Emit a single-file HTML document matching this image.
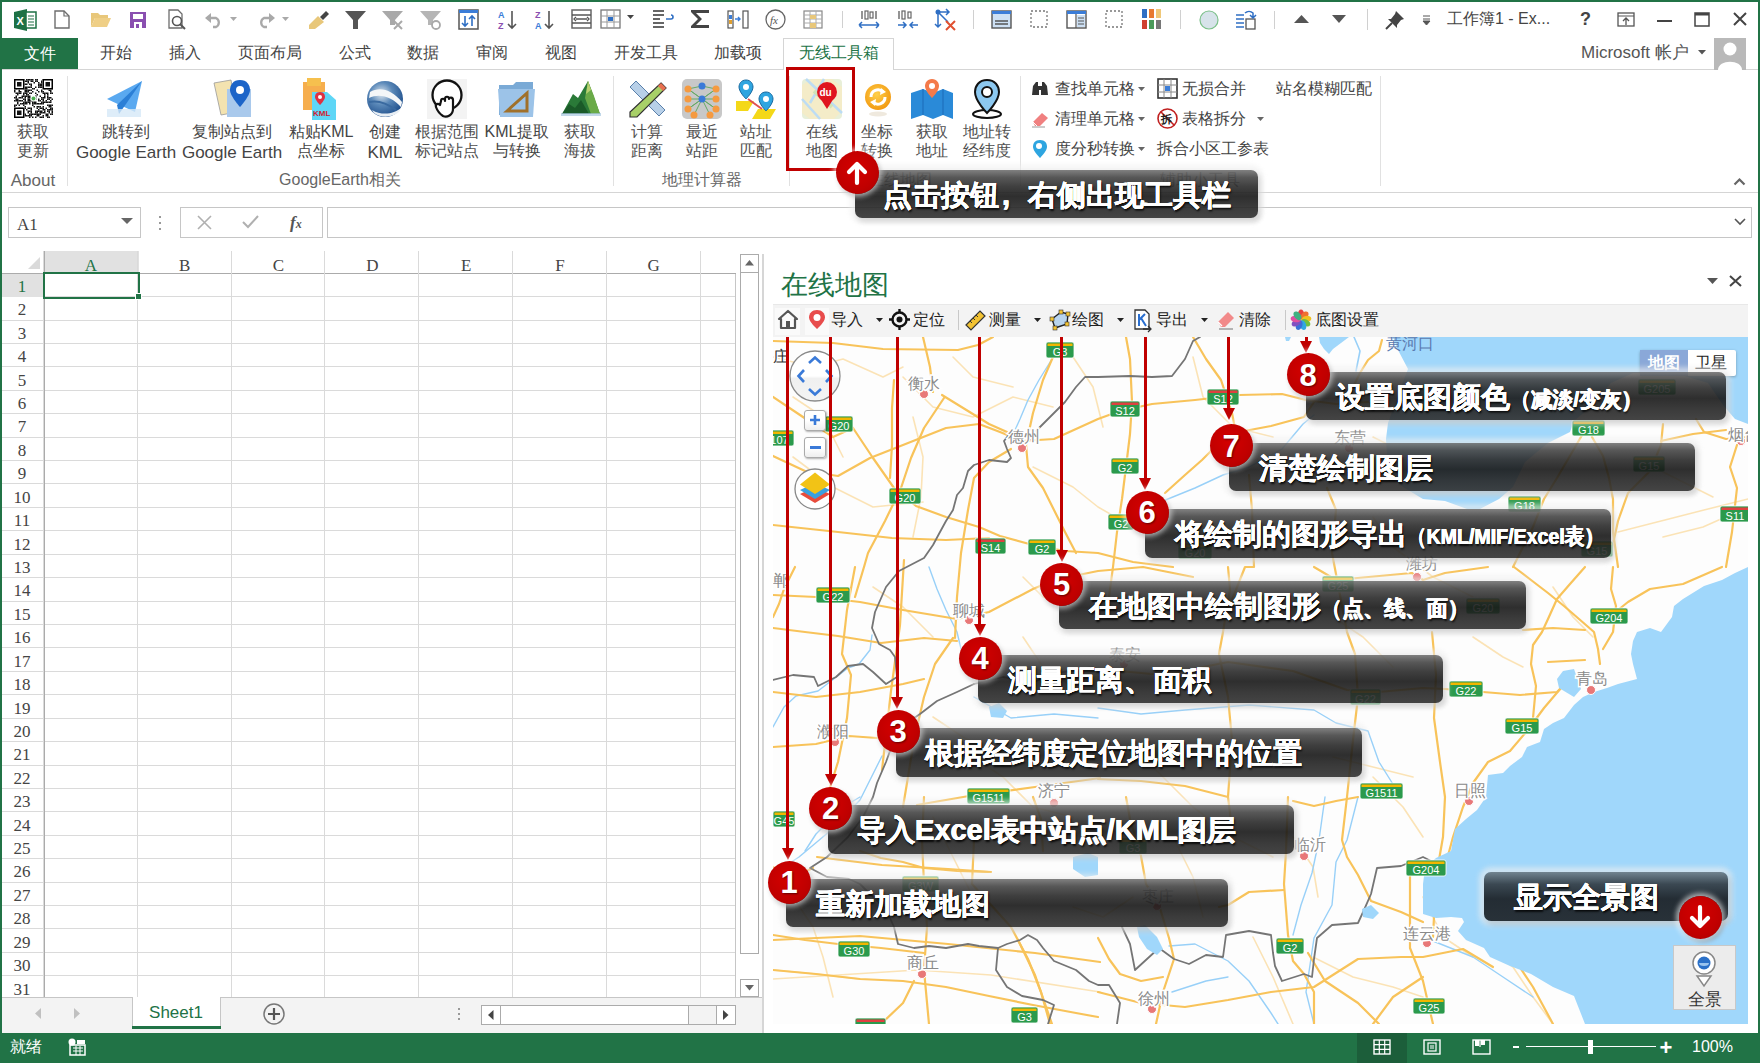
<!DOCTYPE html><html><head><meta charset="utf-8"><style>

*{box-sizing:border-box}
html,body{margin:0;padding:0}
body{width:1760px;height:1063px;overflow:hidden;position:relative;background:#fff;font-family:"Liberation Sans",sans-serif;color:#444}
.a{position:absolute}
.t{position:absolute;white-space:nowrap;line-height:1}
.c{text-align:center}
svg{position:absolute;overflow:visible}


</style></head><body>
<svg style="left:14px;top:9px" width="22" height="22" viewBox="0 0 22 22"><path d="M0 3 L13 0 L13 22 L0 19Z" fill="#1e7145"/><rect x="12" y="3" width="10" height="16" fill="#fff" stroke="#1e7145" stroke-width="1.5"/><path d="M14 7h6M14 10h6M14 13h6M14 16h6" stroke="#1e7145" stroke-width="1.2"/><text x="2.5" y="16" font-size="11" font-weight="bold" fill="#fff" font-family="Liberation Sans">X</text></svg>
<svg style="left:54px;top:10px" width="16" height="19" viewBox="0 0 16 19"><path d="M1 1 H10 L15 6 V18 H1Z" fill="#fff" stroke="#6d6d6d" stroke-width="1.4"/><path d="M10 1V6H15" fill="none" stroke="#6d6d6d" stroke-width="1.2"/></svg>
<svg style="left:90px;top:11px" width="22" height="17" viewBox="0 0 22 17"><path d="M1 2 H8 L10 4 H18 V7 H5 L1 16Z" fill="#e8c77a"/><path d="M5 7 H21 L17 16 H1Z" fill="#efcf86"/></svg>
<svg style="left:129px;top:11px" width="18" height="18" viewBox="0 0 18 18"><rect x="1" y="1" width="16" height="16" fill="#8a4fb0"/><rect x="4" y="3" width="10" height="5" fill="#fff"/><rect x="5" y="11" width="8" height="6" fill="#fff"/><rect x="7" y="13" width="3" height="4" fill="#8a4fb0"/></svg>
<svg style="left:168px;top:9px" width="19" height="21" viewBox="0 0 19 21"><path d="M1 1 H10 L14 5 V19 H1Z" fill="#fff" stroke="#6d6d6d" stroke-width="1.3"/><circle cx="9" cy="12" r="4.5" fill="#fff" stroke="#555" stroke-width="1.6"/><path d="M12 15 L17 20" stroke="#555" stroke-width="2"/></svg>
<svg style="left:204px;top:10px" width="20" height="18" viewBox="0 0 20 18"><path d="M4 8 H12 A5 5 0 0 1 12 17 H9" fill="none" stroke="#a9a9a9" stroke-width="2.3"/><path d="M1 8 L7 3 V13Z" fill="#a9a9a9"/></svg>
<svg style="left:230px;top:17px" width="8" height="5" viewBox="0 0 8 5"><path d="M0 0H7L3.5 4Z" fill="#a9a9a9"/></svg>
<svg style="left:256px;top:10px" width="20" height="18" viewBox="0 0 20 18"><path d="M16 8 H8 A5 5 0 0 0 8 17 H11" fill="none" stroke="#a9a9a9" stroke-width="2.3"/><path d="M19 8 L13 3 V13Z" fill="#a9a9a9"/></svg>
<svg style="left:282px;top:17px" width="8" height="5" viewBox="0 0 8 5"><path d="M0 0H7L3.5 4Z" fill="#a9a9a9"/></svg>
<svg style="left:307px;top:10px" width="22" height="19" viewBox="0 0 22 19"><path d="M13 7 L19 1 L22 4 L16 10Z" fill="#444"/><path d="M2 15 L11 6 L17 12 L8 19 L2 19Z" fill="#e8c77a"/></svg>
<svg style="left:345px;top:10px" width="21" height="19" viewBox="0 0 21 19"><path d="M0 1 H21 L13 10 V19 H8 V10Z" fill="#555"/></svg>
<svg style="left:382px;top:10px" width="21" height="19" viewBox="0 0 21 19"><path d="M0 1 H21 L13 10 V15 H8 V10Z" fill="#a9a9a9"/><path d="M12 11 L20 19 M20 11 L12 19" stroke="#a9a9a9" stroke-width="2"/></svg>
<svg style="left:420px;top:10px" width="21" height="19" viewBox="0 0 21 19"><path d="M0 1 H21 L13 10 V15 H8 V10Z" fill="#b5b5b5"/><circle cx="16" cy="15" r="4" fill="none" stroke="#a9a9a9" stroke-width="1.8"/></svg>
<svg style="left:458px;top:9px" width="21" height="21" viewBox="0 0 21 21"><rect x="1" y="1" width="19" height="19" fill="#fff" stroke="#555" stroke-width="1.5"/><rect x="1" y="1" width="19" height="3" fill="#3b7dd8"/><path d="M7 7V17M4 14L7 17L10 14M14 17V7M11 10L14 7L17 10" fill="none" stroke="#2f6fc4" stroke-width="1.6"/></svg>
<svg style="left:498px;top:9px" width="20" height="21" viewBox="0 0 20 21"><text x="0" y="9" font-size="9" fill="#3b7dd8" font-family="Liberation Sans" font-weight="bold">A</text><text x="0" y="20" font-size="9" fill="#8a4fb0" font-family="Liberation Sans" font-weight="bold">Z</text><path d="M14 2V19M10 15L14 19L18 15" fill="none" stroke="#555" stroke-width="1.6"/></svg>
<svg style="left:535px;top:9px" width="20" height="21" viewBox="0 0 20 21"><text x="0" y="9" font-size="9" fill="#8a4fb0" font-family="Liberation Sans" font-weight="bold">Z</text><text x="0" y="20" font-size="9" fill="#3b7dd8" font-family="Liberation Sans" font-weight="bold">A</text><path d="M14 2V19M10 15L14 19L18 15" fill="none" stroke="#555" stroke-width="1.6"/></svg>
<svg style="left:571px;top:9px" width="21" height="20" viewBox="0 0 21 20"><rect x="1" y="1" width="19" height="18" fill="none" stroke="#666" stroke-width="1.5"/><path d="M1 6H20M1 14H20M5 10H16M5 8L3 10L5 12M16 8L18 10L16 12" fill="none" stroke="#555" stroke-width="1.3"/></svg>
<svg style="left:600px;top:9px" width="21" height="20" viewBox="0 0 21 20"><rect x="1" y="1" width="19" height="18" fill="none" stroke="#777" stroke-width="1.3"/><path d="M1 7H20M1 13H20M7 1V19M14 1V19" stroke="#999" stroke-width="1"/><rect x="8" y="8" width="5" height="4" fill="#2f6fc4"/></svg>
<svg style="left:627px;top:15px" width="8" height="5" viewBox="0 0 8 5"><path d="M0 0H7L3.5 4Z" fill="#444"/></svg>
<svg style="left:652px;top:9px" width="22" height="20" viewBox="0 0 22 20"><path d="M1 2H12M1 6H12M1 10H8M1 14H12M1 18H12" stroke="#666" stroke-width="2"/><path d="M14 10H19A2 2 0 0 0 19 6" fill="none" stroke="#2f6fc4" stroke-width="1.6"/></svg>
<svg style="left:690px;top:9px" width="20" height="20" viewBox="0 0 20 20"><path d="M1 1H19V4H6L12 10L6 16H19V19H1V17L8 10L1 3Z" fill="#444"/></svg>
<svg style="left:727px;top:10px" width="22" height="19" viewBox="0 0 22 19"><rect x="1" y="1" width="5" height="17" fill="#fff" stroke="#555" stroke-width="1.2"/><rect x="2" y="5" width="3" height="4" fill="#3b7dd8"/><rect x="2" y="10" width="3" height="4" fill="#e0a030"/><rect x="16" y="1" width="5" height="17" fill="#fff" stroke="#555" stroke-width="1.2"/><path d="M8 9H13M11 7L13 9L11 11" stroke="#3b7dd8" stroke-width="1.4" fill="none"/></svg>
<svg style="left:765px;top:9px" width="21" height="21" viewBox="0 0 21 21"><circle cx="10.5" cy="10.5" r="9.5" fill="none" stroke="#666" stroke-width="1.3"/><text x="5" y="15" font-size="11" font-style="italic" fill="#555" font-family="Liberation Serif">fx</text></svg>
<svg style="left:803px;top:10px" width="20" height="19" viewBox="0 0 20 19"><rect x="1" y="1" width="18" height="17" fill="#fff" stroke="#888" stroke-width="1.2"/><path d="M1 5H19M1 9H19M1 13H19M7 1V18M13 1V18" stroke="#aaa" stroke-width="1"/><rect x="7" y="5" width="6" height="4" fill="#e8c77a"/><rect x="7" y="13" width="6" height="5" fill="#e8c77a"/></svg>
<div class="a" style="left:842px;top:11px;width:1px;height:17px;background:#d0d0d0"></div>
<svg style="left:858px;top:9px" width="22" height="21" viewBox="0 0 22 21"><path d="M4 2V10M18 2V10" stroke="#666" stroke-width="1.4"/><rect x="7" y="2" width="3" height="8" fill="none" stroke="#666" stroke-width="1.2"/><rect x="12" y="3" width="3" height="6" fill="none" stroke="#666" stroke-width="1.2"/><path d="M1 16H21M1 16L4 13M1 16L4 19M21 16L18 13M21 16L18 19" stroke="#2f6fc4" stroke-width="1.5" fill="none"/></svg>
<svg style="left:897px;top:9px" width="22" height="21" viewBox="0 0 22 21"><path d="M2 2V10" stroke="#666" stroke-width="1.4"/><rect x="5" y="2" width="3" height="8" fill="none" stroke="#666" stroke-width="1.2"/><rect x="11" y="3" width="3" height="6" fill="none" stroke="#666" stroke-width="1.2"/><path d="M1 16H9M6 13L9 16L6 19M21 16H13M16 13L13 16L16 19" stroke="#2f6fc4" stroke-width="1.5" fill="none"/></svg>
<svg style="left:934px;top:9px" width="23" height="21" viewBox="0 0 23 21"><circle cx="4" cy="3" r="2.5" fill="#2f6fc4"/><path d="M4 3V18M1 15L4 18L7 15M4 3L15 3M12 0L15 3L12 6M4 3L14 13" stroke="#2f6fc4" stroke-width="1.5" fill="none"/><path d="M12 12L21 21M21 12L12 21" stroke="#e05030" stroke-width="2"/></svg>
<div class="a" style="left:973px;top:10px;width:1px;height:19px;background:#d0d0d0"></div>
<svg style="left:991px;top:10px" width="21" height="19" viewBox="0 0 21 19"><rect x="1" y="1" width="19" height="17" fill="#cde0f4" stroke="#555" stroke-width="1.4"/><rect x="1" y="1" width="19" height="3" fill="#3b7dd8"/><path d="M4 11H17M4 14H17" stroke="#555" stroke-width="1.3"/></svg>
<svg style="left:1030px;top:10px" width="18" height="18" viewBox="0 0 18 18"><rect x="1" y="1" width="16" height="16" fill="none" stroke="#777" stroke-width="1.3" stroke-dasharray="2 2"/></svg>
<svg style="left:1066px;top:10px" width="21" height="19" viewBox="0 0 21 19"><rect x="1" y="1" width="19" height="17" fill="#fff" stroke="#555" stroke-width="1.4"/><rect x="1" y="1" width="19" height="3" fill="#3b7dd8"/><rect x="11" y="5" width="8" height="12" fill="#cde0f4"/><path d="M10 4V18M12 8H18M12 11H18M12 14H18" stroke="#555" stroke-width="1.2"/></svg>
<svg style="left:1105px;top:10px" width="18" height="18" viewBox="0 0 18 18"><rect x="1" y="1" width="16" height="16" fill="none" stroke="#777" stroke-width="1.3" stroke-dasharray="2 2"/></svg>
<svg style="left:1142px;top:9px" width="20" height="20" viewBox="0 0 20 20"><rect x="0" y="0" width="5" height="9" fill="#2f6fc4"/><rect x="7" y="0" width="5" height="9" fill="#e87a30"/><rect x="14" y="0" width="5" height="9" fill="#f0c878"/><rect x="0" y="11" width="5" height="9" fill="#d04030"/><rect x="7" y="11" width="5" height="9" fill="#4a9a5a"/><rect x="14" y="11" width="5" height="9" fill="#777"/></svg>
<div class="a" style="left:1180px;top:10px;width:1px;height:19px;background:#d0d0d0"></div>
<svg style="left:1199px;top:10px" width="20" height="20" viewBox="0 0 20 20"><circle cx="10" cy="10" r="9" fill="#d7e3ea" stroke="#7cc08a" stroke-width="1.2"/></svg>
<svg style="left:1235px;top:8px" width="22" height="22" viewBox="0 0 22 22"><path d="M1 7H9M1 11H9M1 15H9M1 19H9" stroke="#2f6fc4" stroke-width="1.7"/><rect x="11" y="11" width="9" height="10" fill="#fff" stroke="#555" stroke-width="1.3"/><path d="M10 5 A6 6 0 0 1 18 5 L18 9 M15 7 L18 10 L21 7" fill="none" stroke="#2f6fc4" stroke-width="1.5"/></svg>
<div class="a" style="left:1274px;top:11px;width:1px;height:18px;background:#d0d0d0"></div>
<svg style="left:1294px;top:15px" width="15" height="9" viewBox="0 0 15 9"><path d="M0 8 L7.5 0 L15 8Z" fill="#555"/></svg>
<svg style="left:1332px;top:15px" width="14" height="9" viewBox="0 0 14 9"><path d="M0 0 L14 0 L7 8Z" fill="#555"/></svg>
<div class="a" style="left:1367px;top:9px;width:1px;height:21px;background:#d0d0d0"></div>
<svg style="left:1385px;top:10px" width="20" height="19" viewBox="0 0 20 19"><path d="M11 1 L19 9 L16 10 L12 15 L12 18 L3 9 L6 9 L10 4Z" fill="#444"/><path d="M7 13 L1 19" stroke="#444" stroke-width="2"/></svg>
<svg style="left:1423px;top:15px" width="8" height="10" viewBox="0 0 8 10"><path d="M0 1H7M0 4H7M0 6H7L3.5 10Z" fill="#555" stroke="#555" stroke-width="1"/></svg>
<div class="t" style="left:1447px;top:11.0px;font-size:16px;color:#444;">工作簿1 - Ex...</div>
<div class="t" style="left:1580px;top:10.0px;font-size:18px;color:#444;font-weight:bold">?</div>
<svg style="left:1617px;top:12px" width="18" height="15" viewBox="0 0 18 15"><rect x="1" y="1" width="16" height="13" fill="none" stroke="#555" stroke-width="1.3"/><path d="M1 4H17" stroke="#555" stroke-width="1"/><path d="M9 13V6M6 9L9 6L12 9" fill="none" stroke="#555" stroke-width="1.3"/></svg>
<div class="a" style="left:1657px;top:20px;width:15px;height:2px;background:#444"></div>
<svg style="left:1694px;top:12px" width="16" height="15" viewBox="0 0 16 15"><rect x="1" y="1" width="14" height="13" fill="none" stroke="#444" stroke-width="1.5"/><rect x="1" y="1" width="14" height="2.5" fill="#444"/></svg>
<svg style="left:1733px;top:12px" width="14" height="14" viewBox="0 0 14 14"><path d="M1 1L13 13M13 1L1 13" stroke="#444" stroke-width="2"/></svg>
<div class="a" style="left:2px;top:38px;width:76px;height:32px;background:#217346"></div>
<div class="t" style="left:-110px;width:300px;text-align:center;top:46.0px;font-size:16px;color:#fff;">文件</div>
<div class="a" style="left:0px;top:69px;width:1758px;height:1px;background:#d5d5d5"></div>
<div class="a" style="left:783px;top:38px;width:111px;height:32px;background:#fff;border:1px solid #d5d5d5;border-bottom:none"></div>
<div class="t" style="left:100px;top:45.0px;font-size:16px;color:#444;">开始</div>
<div class="t" style="left:169px;top:45.0px;font-size:16px;color:#444;">插入</div>
<div class="t" style="left:238px;top:45.0px;font-size:16px;color:#444;">页面布局</div>
<div class="t" style="left:339px;top:45.0px;font-size:16px;color:#444;">公式</div>
<div class="t" style="left:407px;top:45.0px;font-size:16px;color:#444;">数据</div>
<div class="t" style="left:476px;top:45.0px;font-size:16px;color:#444;">审阅</div>
<div class="t" style="left:545px;top:45.0px;font-size:16px;color:#444;">视图</div>
<div class="t" style="left:614px;top:45.0px;font-size:16px;color:#444;">开发工具</div>
<div class="t" style="left:714px;top:45.0px;font-size:16px;color:#444;">加载项</div>
<div class="t" style="left:799px;top:45.0px;font-size:16px;color:#217346;">无线工具箱</div>
<div class="t" style="left:1581px;top:43.5px;font-size:17px;color:#555;">Microsoft 帐户</div>
<svg style="left:1698px;top:50px" width="8" height="5" viewBox="0 0 8 5"><path d="M0 0H8L4 4.5Z" fill="#555"/></svg>
<svg style="left:1714px;top:38px" width="32" height="32" viewBox="0 0 32 32"><rect width="32" height="32" fill="#b9b9b9"/><circle cx="16" cy="11" r="6.5" fill="#fff"/><path d="M4 32 C4 21 28 21 28 32Z" fill="#fff"/><circle cx="16" cy="11" r="5" fill="#b9b9b9" opacity="0"/></svg>
<div class="a" style="left:0px;top:192px;width:1758px;height:1px;background:#d5d5d5"></div>
<div class="a" style="left:67px;top:76px;width:1px;height:110px;background:#e1e1e1"></div>
<div class="a" style="left:613px;top:76px;width:1px;height:110px;background:#e1e1e1"></div>
<div class="a" style="left:789px;top:76px;width:1px;height:110px;background:#e1e1e1"></div>
<div class="a" style="left:1020px;top:76px;width:1px;height:110px;background:#e1e1e1"></div>
<div class="a" style="left:1380px;top:76px;width:1px;height:110px;background:#e1e1e1"></div>
<div class="t" style="left:-117px;width:300px;text-align:center;top:124.0px;font-size:16px;color:#505050;">获取</div>
<div class="t" style="left:-117px;width:300px;text-align:center;top:143.0px;font-size:16px;color:#505050;">更新</div>
<div class="t" style="left:-24px;width:300px;text-align:center;top:124.0px;font-size:16px;color:#444;">跳转到</div>
<div class="t" style="left:-24px;width:300px;text-align:center;top:143.5px;font-size:17px;color:#444;">Google Earth</div>
<div class="t" style="left:82px;width:300px;text-align:center;top:124.0px;font-size:16px;color:#444;">复制站点到</div>
<div class="t" style="left:82px;width:300px;text-align:center;top:143.5px;font-size:17px;color:#444;">Google Earth</div>
<div class="t" style="left:171px;width:300px;text-align:center;top:124.0px;font-size:16px;color:#444;">粘贴KML</div>
<div class="t" style="left:171px;width:300px;text-align:center;top:143.0px;font-size:16px;color:#444;">点坐标</div>
<div class="t" style="left:235px;width:300px;text-align:center;top:124.0px;font-size:16px;color:#444;">创建</div>
<div class="t" style="left:235px;width:300px;text-align:center;top:143.5px;font-size:17px;color:#444;">KML</div>
<div class="t" style="left:297px;width:300px;text-align:center;top:124.0px;font-size:16px;color:#505050;">根据范围</div>
<div class="t" style="left:297px;width:300px;text-align:center;top:143.0px;font-size:16px;color:#505050;">标记站点</div>
<div class="t" style="left:367px;width:300px;text-align:center;top:124.0px;font-size:16px;color:#444;">KML提取</div>
<div class="t" style="left:367px;width:300px;text-align:center;top:143.0px;font-size:16px;color:#444;">与转换</div>
<div class="t" style="left:430px;width:300px;text-align:center;top:124.0px;font-size:16px;color:#505050;">获取</div>
<div class="t" style="left:430px;width:300px;text-align:center;top:143.0px;font-size:16px;color:#505050;">海拔</div>
<div class="t" style="left:497px;width:300px;text-align:center;top:124.0px;font-size:16px;color:#505050;">计算</div>
<div class="t" style="left:497px;width:300px;text-align:center;top:143.0px;font-size:16px;color:#505050;">距离</div>
<div class="t" style="left:552px;width:300px;text-align:center;top:124.0px;font-size:16px;color:#505050;">最近</div>
<div class="t" style="left:552px;width:300px;text-align:center;top:143.0px;font-size:16px;color:#505050;">站距</div>
<div class="t" style="left:606px;width:300px;text-align:center;top:124.0px;font-size:16px;color:#505050;">站址</div>
<div class="t" style="left:606px;width:300px;text-align:center;top:143.0px;font-size:16px;color:#505050;">匹配</div>
<div class="t" style="left:672px;width:300px;text-align:center;top:124.0px;font-size:16px;color:#505050;">在线</div>
<div class="t" style="left:672px;width:300px;text-align:center;top:143.0px;font-size:16px;color:#505050;">地图</div>
<div class="t" style="left:727px;width:300px;text-align:center;top:124.0px;font-size:16px;color:#505050;">坐标</div>
<div class="t" style="left:727px;width:300px;text-align:center;top:143.0px;font-size:16px;color:#505050;">转换</div>
<div class="t" style="left:782px;width:300px;text-align:center;top:124.0px;font-size:16px;color:#505050;">获取</div>
<div class="t" style="left:782px;width:300px;text-align:center;top:143.0px;font-size:16px;color:#505050;">地址</div>
<div class="t" style="left:837px;width:300px;text-align:center;top:124.0px;font-size:16px;color:#505050;">地址转</div>
<div class="t" style="left:837px;width:300px;text-align:center;top:143.0px;font-size:16px;color:#505050;">经纬度</div>
<div class="t" style="left:-117px;width:300px;text-align:center;top:171.5px;font-size:17px;color:#666;">About</div>
<div class="t" style="left:190px;width:300px;text-align:center;top:172.0px;font-size:16px;color:#666;">GoogleEarth相关</div>
<div class="t" style="left:552px;width:300px;text-align:center;top:172.0px;font-size:16px;color:#666;">地理计算器</div>
<div class="t" style="left:750px;width:300px;text-align:center;top:172.0px;font-size:16px;color:#666;">在线地图</div>
<div class="t" style="left:1050px;width:300px;text-align:center;top:172.0px;font-size:16px;color:#666;">辅助小工具</div>
<div class="t" style="left:1055px;top:81.0px;font-size:16px;color:#444;">查找单元格</div>
<svg style="left:1138px;top:87px" width="7" height="4" viewBox="0 0 7 4"><path d="M0 0H7L3.5 4Z" fill="#666"/></svg>
<div class="t" style="left:1055px;top:111.0px;font-size:16px;color:#444;">清理单元格</div>
<svg style="left:1138px;top:117px" width="7" height="4" viewBox="0 0 7 4"><path d="M0 0H7L3.5 4Z" fill="#666"/></svg>
<div class="t" style="left:1055px;top:141.0px;font-size:16px;color:#444;">度分秒转换</div>
<svg style="left:1138px;top:147px" width="7" height="4" viewBox="0 0 7 4"><path d="M0 0H7L3.5 4Z" fill="#666"/></svg>
<div class="t" style="left:1182px;top:81.0px;font-size:16px;color:#444;">无损合并</div>
<div class="t" style="left:1182px;top:111.0px;font-size:16px;color:#444;">表格拆分</div>
<svg style="left:1257px;top:117px" width="7" height="4" viewBox="0 0 7 4"><path d="M0 0H7L3.5 4Z" fill="#666"/></svg>
<div class="t" style="left:1157px;top:141.0px;font-size:16px;color:#444;">拆合小区工参表</div>
<div class="t" style="left:1276px;top:81.0px;font-size:16px;color:#444;">站名模糊匹配</div>
<svg style="left:1733px;top:177px" width="13" height="9" viewBox="0 0 13 9"><path d="M1.5 7.5L6.5 2.5L11.5 7.5" fill="none" stroke="#666" stroke-width="2.2"/></svg>
<svg style="left:1031px;top:81px" width="18" height="15" viewBox="0 0 18 15"><path d="M2 5 L5 1 H7 V5 H11 V1 H13 L16 5 L17 14 H10 V9 H8 V14 H1Z" fill="#333"/></svg>
<svg style="left:1031px;top:110px" width="19" height="18" viewBox="0 0 19 18"><path d="M2 12 L11 3 L17 8 L9 16 H4Z" fill="#f08080"/><path d="M2 12 L6 16" stroke="#fff" stroke-width="1"/><path d="M1 17H14" stroke="#999" stroke-width="1"/></svg>
<svg style="left:1032px;top:139px" width="16" height="20" viewBox="0 0 16 20"><path d="M8 1 C3 1 1 4 1 8 C1 12 8 19 8 19 C8 19 15 12 15 8 C15 4 13 1 8 1Z" fill="#2ea5e0"/><circle cx="7" cy="7" r="3" fill="#fff"/></svg>
<svg style="left:1157px;top:78px" width="21" height="21" viewBox="0 0 21 21"><rect x="1" y="1" width="19" height="19" fill="#fff" stroke="#333" stroke-width="1.6"/><path d="M7 1V20M14 1V20M1 7H20M1 14H20" stroke="#888" stroke-width="1"/><rect x="8" y="8" width="5" height="5" fill="#3b7dd8"/></svg>
<svg style="left:1157px;top:108px" width="21" height="21" viewBox="0 0 21 21"><circle cx="10.5" cy="10.5" r="9.5" fill="#fff" stroke="#c02020" stroke-width="1.6"/><path d="M4 4L17 17" stroke="#c02020" stroke-width="1.6"/><text x="4" y="15" font-size="11" fill="#222" font-weight="bold">拆</text></svg>
<svg style="left:14px;top:79px" width="39" height="39" viewBox="0 0 39 39"><g fill="#111"><rect x="0.0" y="0.0" width="1.5" height="1.5"/><rect x="1.5" y="0.0" width="1.5" height="1.5"/><rect x="4.5" y="0.0" width="1.5" height="1.5"/><rect x="7.5" y="0.0" width="1.5" height="1.5"/><rect x="9.0" y="0.0" width="1.5" height="1.5"/><rect x="12.0" y="0.0" width="1.5" height="1.5"/><rect x="13.5" y="0.0" width="1.5" height="1.5"/><rect x="15.0" y="0.0" width="1.5" height="1.5"/><rect x="16.5" y="0.0" width="1.5" height="1.5"/><rect x="18.0" y="0.0" width="1.5" height="1.5"/><rect x="21.0" y="0.0" width="1.5" height="1.5"/><rect x="22.5" y="0.0" width="1.5" height="1.5"/><rect x="28.5" y="0.0" width="1.5" height="1.5"/><rect x="31.5" y="0.0" width="1.5" height="1.5"/><rect x="34.5" y="0.0" width="1.5" height="1.5"/><rect x="36.0" y="0.0" width="1.5" height="1.5"/><rect x="37.5" y="0.0" width="1.5" height="1.5"/><rect x="0.0" y="1.5" width="1.5" height="1.5"/><rect x="3.0" y="1.5" width="1.5" height="1.5"/><rect x="7.5" y="1.5" width="1.5" height="1.5"/><rect x="10.5" y="1.5" width="1.5" height="1.5"/><rect x="12.0" y="1.5" width="1.5" height="1.5"/><rect x="13.5" y="1.5" width="1.5" height="1.5"/><rect x="16.5" y="1.5" width="1.5" height="1.5"/><rect x="18.0" y="1.5" width="1.5" height="1.5"/><rect x="21.0" y="1.5" width="1.5" height="1.5"/><rect x="22.5" y="1.5" width="1.5" height="1.5"/><rect x="27.0" y="1.5" width="1.5" height="1.5"/><rect x="34.5" y="1.5" width="1.5" height="1.5"/><rect x="37.5" y="1.5" width="1.5" height="1.5"/><rect x="0.0" y="3.0" width="1.5" height="1.5"/><rect x="3.0" y="3.0" width="1.5" height="1.5"/><rect x="6.0" y="3.0" width="1.5" height="1.5"/><rect x="13.5" y="3.0" width="1.5" height="1.5"/><rect x="19.5" y="3.0" width="1.5" height="1.5"/><rect x="24.0" y="3.0" width="1.5" height="1.5"/><rect x="27.0" y="3.0" width="1.5" height="1.5"/><rect x="34.5" y="3.0" width="1.5" height="1.5"/><rect x="36.0" y="3.0" width="1.5" height="1.5"/><rect x="0.0" y="4.5" width="1.5" height="1.5"/><rect x="1.5" y="4.5" width="1.5" height="1.5"/><rect x="3.0" y="4.5" width="1.5" height="1.5"/><rect x="4.5" y="4.5" width="1.5" height="1.5"/><rect x="6.0" y="4.5" width="1.5" height="1.5"/><rect x="9.0" y="4.5" width="1.5" height="1.5"/><rect x="10.5" y="4.5" width="1.5" height="1.5"/><rect x="12.0" y="4.5" width="1.5" height="1.5"/><rect x="15.0" y="4.5" width="1.5" height="1.5"/><rect x="16.5" y="4.5" width="1.5" height="1.5"/><rect x="24.0" y="4.5" width="1.5" height="1.5"/><rect x="25.5" y="4.5" width="1.5" height="1.5"/><rect x="27.0" y="4.5" width="1.5" height="1.5"/><rect x="31.5" y="4.5" width="1.5" height="1.5"/><rect x="33.0" y="4.5" width="1.5" height="1.5"/><rect x="34.5" y="4.5" width="1.5" height="1.5"/><rect x="36.0" y="4.5" width="1.5" height="1.5"/><rect x="1.5" y="6.0" width="1.5" height="1.5"/><rect x="3.0" y="6.0" width="1.5" height="1.5"/><rect x="4.5" y="6.0" width="1.5" height="1.5"/><rect x="6.0" y="6.0" width="1.5" height="1.5"/><rect x="16.5" y="6.0" width="1.5" height="1.5"/><rect x="24.0" y="6.0" width="1.5" height="1.5"/><rect x="25.5" y="6.0" width="1.5" height="1.5"/><rect x="27.0" y="6.0" width="1.5" height="1.5"/><rect x="30.0" y="6.0" width="1.5" height="1.5"/><rect x="31.5" y="6.0" width="1.5" height="1.5"/><rect x="33.0" y="6.0" width="1.5" height="1.5"/><rect x="34.5" y="6.0" width="1.5" height="1.5"/><rect x="36.0" y="6.0" width="1.5" height="1.5"/><rect x="37.5" y="6.0" width="1.5" height="1.5"/><rect x="0.0" y="7.5" width="1.5" height="1.5"/><rect x="1.5" y="7.5" width="1.5" height="1.5"/><rect x="3.0" y="7.5" width="1.5" height="1.5"/><rect x="4.5" y="7.5" width="1.5" height="1.5"/><rect x="6.0" y="7.5" width="1.5" height="1.5"/><rect x="10.5" y="7.5" width="1.5" height="1.5"/><rect x="12.0" y="7.5" width="1.5" height="1.5"/><rect x="13.5" y="7.5" width="1.5" height="1.5"/><rect x="15.0" y="7.5" width="1.5" height="1.5"/><rect x="16.5" y="7.5" width="1.5" height="1.5"/><rect x="21.0" y="7.5" width="1.5" height="1.5"/><rect x="24.0" y="7.5" width="1.5" height="1.5"/><rect x="25.5" y="7.5" width="1.5" height="1.5"/><rect x="27.0" y="7.5" width="1.5" height="1.5"/><rect x="28.5" y="7.5" width="1.5" height="1.5"/><rect x="31.5" y="7.5" width="1.5" height="1.5"/><rect x="33.0" y="7.5" width="1.5" height="1.5"/><rect x="37.5" y="7.5" width="1.5" height="1.5"/><rect x="1.5" y="9.0" width="1.5" height="1.5"/><rect x="9.0" y="9.0" width="1.5" height="1.5"/><rect x="10.5" y="9.0" width="1.5" height="1.5"/><rect x="12.0" y="9.0" width="1.5" height="1.5"/><rect x="18.0" y="9.0" width="1.5" height="1.5"/><rect x="19.5" y="9.0" width="1.5" height="1.5"/><rect x="30.0" y="9.0" width="1.5" height="1.5"/><rect x="33.0" y="9.0" width="1.5" height="1.5"/><rect x="34.5" y="9.0" width="1.5" height="1.5"/><rect x="36.0" y="9.0" width="1.5" height="1.5"/><rect x="37.5" y="9.0" width="1.5" height="1.5"/><rect x="0.0" y="10.5" width="1.5" height="1.5"/><rect x="4.5" y="10.5" width="1.5" height="1.5"/><rect x="10.5" y="10.5" width="1.5" height="1.5"/><rect x="12.0" y="10.5" width="1.5" height="1.5"/><rect x="13.5" y="10.5" width="1.5" height="1.5"/><rect x="15.0" y="10.5" width="1.5" height="1.5"/><rect x="16.5" y="10.5" width="1.5" height="1.5"/><rect x="22.5" y="10.5" width="1.5" height="1.5"/><rect x="27.0" y="10.5" width="1.5" height="1.5"/><rect x="34.5" y="10.5" width="1.5" height="1.5"/><rect x="36.0" y="10.5" width="1.5" height="1.5"/><rect x="0.0" y="12.0" width="1.5" height="1.5"/><rect x="4.5" y="12.0" width="1.5" height="1.5"/><rect x="6.0" y="12.0" width="1.5" height="1.5"/><rect x="10.5" y="12.0" width="1.5" height="1.5"/><rect x="12.0" y="12.0" width="1.5" height="1.5"/><rect x="13.5" y="12.0" width="1.5" height="1.5"/><rect x="18.0" y="12.0" width="1.5" height="1.5"/><rect x="24.0" y="12.0" width="1.5" height="1.5"/><rect x="27.0" y="12.0" width="1.5" height="1.5"/><rect x="28.5" y="12.0" width="1.5" height="1.5"/><rect x="36.0" y="12.0" width="1.5" height="1.5"/><rect x="1.5" y="13.5" width="1.5" height="1.5"/><rect x="3.0" y="13.5" width="1.5" height="1.5"/><rect x="4.5" y="13.5" width="1.5" height="1.5"/><rect x="6.0" y="13.5" width="1.5" height="1.5"/><rect x="9.0" y="13.5" width="1.5" height="1.5"/><rect x="10.5" y="13.5" width="1.5" height="1.5"/><rect x="12.0" y="13.5" width="1.5" height="1.5"/><rect x="15.0" y="13.5" width="1.5" height="1.5"/><rect x="16.5" y="13.5" width="1.5" height="1.5"/><rect x="21.0" y="13.5" width="1.5" height="1.5"/><rect x="28.5" y="13.5" width="1.5" height="1.5"/><rect x="30.0" y="13.5" width="1.5" height="1.5"/><rect x="31.5" y="13.5" width="1.5" height="1.5"/><rect x="33.0" y="13.5" width="1.5" height="1.5"/><rect x="36.0" y="13.5" width="1.5" height="1.5"/><rect x="37.5" y="13.5" width="1.5" height="1.5"/><rect x="3.0" y="15.0" width="1.5" height="1.5"/><rect x="9.0" y="15.0" width="1.5" height="1.5"/><rect x="12.0" y="15.0" width="1.5" height="1.5"/><rect x="13.5" y="15.0" width="1.5" height="1.5"/><rect x="22.5" y="15.0" width="1.5" height="1.5"/><rect x="30.0" y="15.0" width="1.5" height="1.5"/><rect x="33.0" y="15.0" width="1.5" height="1.5"/><rect x="1.5" y="16.5" width="1.5" height="1.5"/><rect x="7.5" y="16.5" width="1.5" height="1.5"/><rect x="9.0" y="16.5" width="1.5" height="1.5"/><rect x="10.5" y="16.5" width="1.5" height="1.5"/><rect x="12.0" y="16.5" width="1.5" height="1.5"/><rect x="13.5" y="16.5" width="1.5" height="1.5"/><rect x="15.0" y="16.5" width="1.5" height="1.5"/><rect x="21.0" y="16.5" width="1.5" height="1.5"/><rect x="25.5" y="16.5" width="1.5" height="1.5"/><rect x="30.0" y="16.5" width="1.5" height="1.5"/><rect x="33.0" y="16.5" width="1.5" height="1.5"/><rect x="0.0" y="18.0" width="1.5" height="1.5"/><rect x="1.5" y="18.0" width="1.5" height="1.5"/><rect x="4.5" y="18.0" width="1.5" height="1.5"/><rect x="6.0" y="18.0" width="1.5" height="1.5"/><rect x="7.5" y="18.0" width="1.5" height="1.5"/><rect x="10.5" y="18.0" width="1.5" height="1.5"/><rect x="13.5" y="18.0" width="1.5" height="1.5"/><rect x="15.0" y="18.0" width="1.5" height="1.5"/><rect x="16.5" y="18.0" width="1.5" height="1.5"/><rect x="21.0" y="18.0" width="1.5" height="1.5"/><rect x="27.0" y="18.0" width="1.5" height="1.5"/><rect x="28.5" y="18.0" width="1.5" height="1.5"/><rect x="30.0" y="18.0" width="1.5" height="1.5"/><rect x="33.0" y="18.0" width="1.5" height="1.5"/><rect x="34.5" y="18.0" width="1.5" height="1.5"/><rect x="36.0" y="18.0" width="1.5" height="1.5"/><rect x="1.5" y="19.5" width="1.5" height="1.5"/><rect x="3.0" y="19.5" width="1.5" height="1.5"/><rect x="9.0" y="19.5" width="1.5" height="1.5"/><rect x="10.5" y="19.5" width="1.5" height="1.5"/><rect x="13.5" y="19.5" width="1.5" height="1.5"/><rect x="15.0" y="19.5" width="1.5" height="1.5"/><rect x="21.0" y="19.5" width="1.5" height="1.5"/><rect x="24.0" y="19.5" width="1.5" height="1.5"/><rect x="27.0" y="19.5" width="1.5" height="1.5"/><rect x="28.5" y="19.5" width="1.5" height="1.5"/><rect x="33.0" y="19.5" width="1.5" height="1.5"/><rect x="34.5" y="19.5" width="1.5" height="1.5"/><rect x="37.5" y="19.5" width="1.5" height="1.5"/><rect x="0.0" y="21.0" width="1.5" height="1.5"/><rect x="1.5" y="21.0" width="1.5" height="1.5"/><rect x="3.0" y="21.0" width="1.5" height="1.5"/><rect x="4.5" y="21.0" width="1.5" height="1.5"/><rect x="6.0" y="21.0" width="1.5" height="1.5"/><rect x="7.5" y="21.0" width="1.5" height="1.5"/><rect x="10.5" y="21.0" width="1.5" height="1.5"/><rect x="13.5" y="21.0" width="1.5" height="1.5"/><rect x="15.0" y="21.0" width="1.5" height="1.5"/><rect x="16.5" y="21.0" width="1.5" height="1.5"/><rect x="18.0" y="21.0" width="1.5" height="1.5"/><rect x="19.5" y="21.0" width="1.5" height="1.5"/><rect x="24.0" y="21.0" width="1.5" height="1.5"/><rect x="25.5" y="21.0" width="1.5" height="1.5"/><rect x="28.5" y="21.0" width="1.5" height="1.5"/><rect x="31.5" y="21.0" width="1.5" height="1.5"/><rect x="36.0" y="21.0" width="1.5" height="1.5"/><rect x="3.0" y="22.5" width="1.5" height="1.5"/><rect x="9.0" y="22.5" width="1.5" height="1.5"/><rect x="10.5" y="22.5" width="1.5" height="1.5"/><rect x="12.0" y="22.5" width="1.5" height="1.5"/><rect x="13.5" y="22.5" width="1.5" height="1.5"/><rect x="15.0" y="22.5" width="1.5" height="1.5"/><rect x="18.0" y="22.5" width="1.5" height="1.5"/><rect x="19.5" y="22.5" width="1.5" height="1.5"/><rect x="21.0" y="22.5" width="1.5" height="1.5"/><rect x="27.0" y="22.5" width="1.5" height="1.5"/><rect x="28.5" y="22.5" width="1.5" height="1.5"/><rect x="30.0" y="22.5" width="1.5" height="1.5"/><rect x="31.5" y="22.5" width="1.5" height="1.5"/><rect x="33.0" y="22.5" width="1.5" height="1.5"/><rect x="34.5" y="22.5" width="1.5" height="1.5"/><rect x="36.0" y="22.5" width="1.5" height="1.5"/><rect x="3.0" y="24.0" width="1.5" height="1.5"/><rect x="6.0" y="24.0" width="1.5" height="1.5"/><rect x="7.5" y="24.0" width="1.5" height="1.5"/><rect x="9.0" y="24.0" width="1.5" height="1.5"/><rect x="10.5" y="24.0" width="1.5" height="1.5"/><rect x="12.0" y="24.0" width="1.5" height="1.5"/><rect x="15.0" y="24.0" width="1.5" height="1.5"/><rect x="18.0" y="24.0" width="1.5" height="1.5"/><rect x="19.5" y="24.0" width="1.5" height="1.5"/><rect x="21.0" y="24.0" width="1.5" height="1.5"/><rect x="22.5" y="24.0" width="1.5" height="1.5"/><rect x="24.0" y="24.0" width="1.5" height="1.5"/><rect x="25.5" y="24.0" width="1.5" height="1.5"/><rect x="27.0" y="24.0" width="1.5" height="1.5"/><rect x="28.5" y="24.0" width="1.5" height="1.5"/><rect x="0.0" y="25.5" width="1.5" height="1.5"/><rect x="1.5" y="25.5" width="1.5" height="1.5"/><rect x="4.5" y="25.5" width="1.5" height="1.5"/><rect x="9.0" y="25.5" width="1.5" height="1.5"/><rect x="18.0" y="25.5" width="1.5" height="1.5"/><rect x="33.0" y="25.5" width="1.5" height="1.5"/><rect x="34.5" y="25.5" width="1.5" height="1.5"/><rect x="36.0" y="25.5" width="1.5" height="1.5"/><rect x="37.5" y="25.5" width="1.5" height="1.5"/><rect x="0.0" y="27.0" width="1.5" height="1.5"/><rect x="10.5" y="27.0" width="1.5" height="1.5"/><rect x="19.5" y="27.0" width="1.5" height="1.5"/><rect x="22.5" y="27.0" width="1.5" height="1.5"/><rect x="24.0" y="27.0" width="1.5" height="1.5"/><rect x="25.5" y="27.0" width="1.5" height="1.5"/><rect x="28.5" y="27.0" width="1.5" height="1.5"/><rect x="34.5" y="27.0" width="1.5" height="1.5"/><rect x="36.0" y="27.0" width="1.5" height="1.5"/><rect x="4.5" y="28.5" width="1.5" height="1.5"/><rect x="6.0" y="28.5" width="1.5" height="1.5"/><rect x="7.5" y="28.5" width="1.5" height="1.5"/><rect x="10.5" y="28.5" width="1.5" height="1.5"/><rect x="13.5" y="28.5" width="1.5" height="1.5"/><rect x="15.0" y="28.5" width="1.5" height="1.5"/><rect x="16.5" y="28.5" width="1.5" height="1.5"/><rect x="22.5" y="28.5" width="1.5" height="1.5"/><rect x="25.5" y="28.5" width="1.5" height="1.5"/><rect x="27.0" y="28.5" width="1.5" height="1.5"/><rect x="28.5" y="28.5" width="1.5" height="1.5"/><rect x="31.5" y="28.5" width="1.5" height="1.5"/><rect x="36.0" y="28.5" width="1.5" height="1.5"/><rect x="37.5" y="28.5" width="1.5" height="1.5"/><rect x="3.0" y="30.0" width="1.5" height="1.5"/><rect x="4.5" y="30.0" width="1.5" height="1.5"/><rect x="6.0" y="30.0" width="1.5" height="1.5"/><rect x="9.0" y="30.0" width="1.5" height="1.5"/><rect x="12.0" y="30.0" width="1.5" height="1.5"/><rect x="16.5" y="30.0" width="1.5" height="1.5"/><rect x="24.0" y="30.0" width="1.5" height="1.5"/><rect x="28.5" y="30.0" width="1.5" height="1.5"/><rect x="30.0" y="30.0" width="1.5" height="1.5"/><rect x="33.0" y="30.0" width="1.5" height="1.5"/><rect x="34.5" y="30.0" width="1.5" height="1.5"/><rect x="36.0" y="30.0" width="1.5" height="1.5"/><rect x="37.5" y="30.0" width="1.5" height="1.5"/><rect x="0.0" y="31.5" width="1.5" height="1.5"/><rect x="3.0" y="31.5" width="1.5" height="1.5"/><rect x="7.5" y="31.5" width="1.5" height="1.5"/><rect x="13.5" y="31.5" width="1.5" height="1.5"/><rect x="15.0" y="31.5" width="1.5" height="1.5"/><rect x="16.5" y="31.5" width="1.5" height="1.5"/><rect x="21.0" y="31.5" width="1.5" height="1.5"/><rect x="22.5" y="31.5" width="1.5" height="1.5"/><rect x="24.0" y="31.5" width="1.5" height="1.5"/><rect x="25.5" y="31.5" width="1.5" height="1.5"/><rect x="27.0" y="31.5" width="1.5" height="1.5"/><rect x="30.0" y="31.5" width="1.5" height="1.5"/><rect x="33.0" y="31.5" width="1.5" height="1.5"/><rect x="34.5" y="31.5" width="1.5" height="1.5"/><rect x="37.5" y="31.5" width="1.5" height="1.5"/><rect x="0.0" y="33.0" width="1.5" height="1.5"/><rect x="13.5" y="33.0" width="1.5" height="1.5"/><rect x="16.5" y="33.0" width="1.5" height="1.5"/><rect x="21.0" y="33.0" width="1.5" height="1.5"/><rect x="22.5" y="33.0" width="1.5" height="1.5"/><rect x="25.5" y="33.0" width="1.5" height="1.5"/><rect x="27.0" y="33.0" width="1.5" height="1.5"/><rect x="28.5" y="33.0" width="1.5" height="1.5"/><rect x="30.0" y="33.0" width="1.5" height="1.5"/><rect x="34.5" y="33.0" width="1.5" height="1.5"/><rect x="37.5" y="33.0" width="1.5" height="1.5"/><rect x="1.5" y="34.5" width="1.5" height="1.5"/><rect x="3.0" y="34.5" width="1.5" height="1.5"/><rect x="4.5" y="34.5" width="1.5" height="1.5"/><rect x="6.0" y="34.5" width="1.5" height="1.5"/><rect x="10.5" y="34.5" width="1.5" height="1.5"/><rect x="15.0" y="34.5" width="1.5" height="1.5"/><rect x="16.5" y="34.5" width="1.5" height="1.5"/><rect x="18.0" y="34.5" width="1.5" height="1.5"/><rect x="19.5" y="34.5" width="1.5" height="1.5"/><rect x="21.0" y="34.5" width="1.5" height="1.5"/><rect x="22.5" y="34.5" width="1.5" height="1.5"/><rect x="24.0" y="34.5" width="1.5" height="1.5"/><rect x="25.5" y="34.5" width="1.5" height="1.5"/><rect x="31.5" y="34.5" width="1.5" height="1.5"/><rect x="33.0" y="34.5" width="1.5" height="1.5"/><rect x="36.0" y="34.5" width="1.5" height="1.5"/><rect x="37.5" y="34.5" width="1.5" height="1.5"/><rect x="0.0" y="36.0" width="1.5" height="1.5"/><rect x="1.5" y="36.0" width="1.5" height="1.5"/><rect x="4.5" y="36.0" width="1.5" height="1.5"/><rect x="10.5" y="36.0" width="1.5" height="1.5"/><rect x="12.0" y="36.0" width="1.5" height="1.5"/><rect x="13.5" y="36.0" width="1.5" height="1.5"/><rect x="15.0" y="36.0" width="1.5" height="1.5"/><rect x="16.5" y="36.0" width="1.5" height="1.5"/><rect x="22.5" y="36.0" width="1.5" height="1.5"/><rect x="24.0" y="36.0" width="1.5" height="1.5"/><rect x="28.5" y="36.0" width="1.5" height="1.5"/><rect x="31.5" y="36.0" width="1.5" height="1.5"/><rect x="33.0" y="36.0" width="1.5" height="1.5"/><rect x="1.5" y="37.5" width="1.5" height="1.5"/><rect x="3.0" y="37.5" width="1.5" height="1.5"/><rect x="4.5" y="37.5" width="1.5" height="1.5"/><rect x="15.0" y="37.5" width="1.5" height="1.5"/><rect x="18.0" y="37.5" width="1.5" height="1.5"/><rect x="21.0" y="37.5" width="1.5" height="1.5"/><rect x="25.5" y="37.5" width="1.5" height="1.5"/><rect x="27.0" y="37.5" width="1.5" height="1.5"/><rect x="28.5" y="37.5" width="1.5" height="1.5"/><rect x="33.0" y="37.5" width="1.5" height="1.5"/><rect x="34.5" y="37.5" width="1.5" height="1.5"/><rect x="0" y="0" width="10.5" height="10.5" fill="#fff"/><rect x="0.75" y="0.75" width="9" height="9" fill="none" stroke="#000" stroke-width="1.5"/><rect x="3" y="3" width="4.5" height="4.5"/><rect x="28.5" y="0" width="10.5" height="10.5" fill="#fff"/><rect x="29.25" y="0.75" width="9" height="9" fill="none" stroke="#000" stroke-width="1.5"/><rect x="31.5" y="3" width="4.5" height="4.5"/><rect x="0" y="28.5" width="10.5" height="10.5" fill="#fff"/><rect x="0.75" y="29.25" width="9" height="9" fill="none" stroke="#000" stroke-width="1.5"/><rect x="3" y="31.5" width="4.5" height="4.5"/><circle cx="19.5" cy="19.5" r="3" fill="#fff"/><circle cx="19.5" cy="19.5" r="2" fill="#4caf50"/></g></svg>
<svg style="left:105px;top:79px" width="40" height="40" viewBox="0 0 40 40"><path d="M2 20 L37 2 L30 33Z" fill="#5aa9f0"/><path d="M12 26 L37 2 L14 35Z" fill="#2b7fd6"/><rect x="2" y="30" width="34" height="8" fill="#d6e8f8" opacity=".8"/></svg>
<svg style="left:213px;top:79px" width="40" height="40" viewBox="0 0 40 40"><path d="M1 4 L18 1 L24 33 L8 36Z" fill="#f3e3b0" stroke="#999" stroke-width=".8"/><rect x="14" y="10" width="24" height="28" fill="#a9c9ec"/><path d="M27 1 C20 1 17 6 17 11 C17 17 27 28 27 28 C27 28 37 17 37 11 C37 6 34 1 27 1Z" fill="#1c64c8"/><circle cx="27" cy="11" r="4" fill="#fff"/></svg>
<svg style="left:303px;top:78px" width="36" height="42" viewBox="0 0 36 42"><rect x="0" y="4" width="22" height="28" fill="#f6ae4e"/><rect x="4" y="0" width="14" height="8" fill="#f6c04e"/><path d="M9 14 H24 L33 22 V42 H9Z" fill="#5ed6f6"/><path d="M17 14 C13 14 12 17 12 19 C12 22 17 27 17 27 C17 27 22 22 22 19 C22 17 21 14 17 14Z" fill="#e03040"/><circle cx="17" cy="19" r="2" fill="#fff"/><text x="10" y="38" font-size="8" font-weight="bold" fill="#d02030" font-family="Liberation Sans">KML</text></svg>
<svg style="left:366px;top:80px" width="38" height="38" viewBox="0 0 38 38"><defs><radialGradient id="ge" cx="40%" cy="35%" r="70%"><stop offset="0" stop-color="#dfe8f0"/><stop offset=".45" stop-color="#5a88b8"/><stop offset="1" stop-color="#1a4a88"/></radialGradient></defs><circle cx="19" cy="19" r="18" fill="url(#ge)"/><path d="M4 12 C14 6 26 10 36 22 L35 27 C26 17 14 13 3 18Z" fill="#f4f6f8"/><path d="M6 30 C16 36 28 34 35 28 L33 32 C26 38 14 38 8 33Z" fill="#e8eef4"/><path d="M3 22 C12 20 22 24 30 30" stroke="#3a6aa0" stroke-width="2" fill="none"/></svg>
<svg style="left:427px;top:79px" width="40" height="40" viewBox="0 0 40 40"><rect x="0" y="0" width="40" height="40" fill="#f3f3f3"/><circle cx="20" cy="16" r="14.5" fill="#fff" stroke="#111" stroke-width="2.3"/><path d="M14 22 C14 19 18 19 18 22 V20 C18 17 22 17 22 20 C22 18 26 18 26 21 V30 C26 36 20 39 16 37 C13 35 10 31 9 28 C8 25 11 24 13 26Z" fill="#fff" stroke="#111" stroke-width="2.2" stroke-linejoin="round"/></svg>
<svg style="left:497px;top:79px" width="40" height="40" viewBox="0 0 40 40"><path d="M2 6 H16 L19 3 H36 V36 H2Z" fill="#7aaad6"/><path d="M1 10 H38 L36 38 H3Z" fill="#9cc3e8"/><path d="M10 32 L30 14 V32Z" fill="none" stroke="#a0702a" stroke-width="3"/></svg>
<svg style="left:561px;top:80px" width="40" height="38" viewBox="0 0 40 38"><path d="M1 34 L12 14 L17 18 L27 1 L39 34Z" fill="#2a7a38"/><path d="M27 1 L33 16 L39 34 H30 L24 18Z" fill="#6aaa48"/><path d="M27 1 L30 10 L25 14Z" fill="#b8d070"/><path d="M1 34 L8 24 L14 28 L20 20 L28 34Z" fill="#1a5a28"/><rect x="0" y="33" width="40" height="3" fill="#a8c8e0" opacity=".7"/></svg>
<svg style="left:627px;top:79px" width="40" height="40" viewBox="0 0 40 40"><path d="M3 8 L9 2 L38 31 L32 37Z" fill="#b8d0e8" stroke="#5a80aa" stroke-width="1"/><path d="M34 4 L39 9 L10 38 L3 38 L3 33Z" fill="#a8d068" stroke="#333" stroke-width="1.2"/><path d="M34 4 L39 9 L36 12 L31 7Z" fill="#e87050"/></svg>
<svg style="left:682px;top:79px" width="40" height="40" viewBox="0 0 40 40"><rect x="0" y="0" width="40" height="40" rx="5" fill="#c8c8c8"/><g stroke="#6a6" stroke-width="1" fill="none"><path d="M6 10 L20 7 L34 10 L20 20 L6 10 M6 20 L20 20 L34 20 M6 30 L20 20 L34 30 M12 36 L20 20 L28 36 M6 10 L34 30 M34 10 L6 30"/></g><g fill="#f59a40"><circle cx="6" cy="10" r="3.5"/><circle cx="34" cy="10" r="3.5"/><circle cx="6" cy="20" r="3.5"/><circle cx="34" cy="20" r="3.5"/><circle cx="6" cy="30" r="3.5"/><circle cx="34" cy="30" r="3.5"/><circle cx="12" cy="36" r="3.5"/><circle cx="28" cy="36" r="3.5"/></g><g fill="#3a7ad8"><circle cx="20" cy="7" r="3.5"/><circle cx="20" cy="20" r="3.5"/></g></svg>
<svg style="left:736px;top:79px" width="40" height="40" viewBox="0 0 40 40"><path d="M0 22 H18 L12 32 H0Z" fill="#f4d818"/><path d="M22 30 H40 L34 40 H16Z" fill="#f4d818"/><path d="M10 1 C5 1 3 5 3 8 C3 13 10 20 10 20 C10 20 17 13 17 8 C17 5 15 1 10 1Z" fill="#2ea5e0" stroke="#1a6aa0" stroke-width="1"/><circle cx="10" cy="8" r="3" fill="#fff"/><path d="M30 13 C25 13 23 17 23 20 C23 25 30 32 30 32 C30 32 37 25 37 20 C37 17 35 13 30 13Z" fill="#2ea5e0" stroke="#1a6aa0" stroke-width="1"/><circle cx="30" cy="20" r="3" fill="#fff"/><path d="M12 20 L26 30" stroke="#e05050" stroke-width="2"/></svg>
<svg style="left:802px;top:79px" width="40" height="40" viewBox="0 0 40 40"><rect x="0" y="0" width="40" height="40" rx="4" fill="#e8efd8"/><path d="M0 6 L10 0 H30 L40 8 V32 L32 40 H8 L0 34Z" fill="#f4ecc8"/><path d="M4 0 L40 34 M0 20 L18 40 M22 0 L8 24" stroke="#bcdcf4" stroke-width="2.5"/><path d="M12 12 L30 28" stroke="#cfe3b8" stroke-width="4"/><circle cx="25" cy="13" r="10" fill="#e0141e"/><path d="M18 19 L25 30 L32 19Z" fill="#e0141e"/><text x="17.5" y="17" font-size="10" font-weight="bold" fill="#fff" font-family="Liberation Sans">du</text></svg>
<svg style="left:861px;top:80px" width="34" height="38" viewBox="0 0 34 38"><defs><radialGradient id="cc" cx="45%" cy="40%" r="60%"><stop offset="0" stop-color="#ffd04a"/><stop offset="1" stop-color="#f29a12"/></radialGradient></defs><ellipse cx="17" cy="34" rx="9" ry="2.5" fill="#e8e0d0" opacity=".7"/><circle cx="17" cy="17" r="13" fill="url(#cc)"/><path d="M10 17 A7 7 0 0 1 22 12" fill="none" stroke="#fff" stroke-width="3"/><path d="M20 8 L25 12 L19 15Z" fill="#fff"/><path d="M24 17 A7 7 0 0 1 12 22" fill="none" stroke="#fff" stroke-width="3"/><path d="M14 26 L9 22 L15 19Z" fill="#fff"/></svg>
<svg style="left:911px;top:79px" width="42" height="40" viewBox="0 0 42 40"><path d="M0 14 L12 10 L22 14 L32 10 L42 14 V40 L32 36 L22 40 L12 36 L0 40Z" fill="#2a8ad8"/><path d="M12 10 V36 M32 10 V36" stroke="#1a6ab8" stroke-width="1"/><path d="M21 0 C16 0 14 4 14 7 C14 12 21 19 21 19 C21 19 28 12 28 7 C28 4 26 0 21 0Z" fill="#f47a4a"/><circle cx="21" cy="7" r="3" fill="#fff"/></svg>
<svg style="left:970px;top:79px" width="34" height="40" viewBox="0 0 34 40"><ellipse cx="17" cy="35" rx="14" ry="4" fill="none" stroke="#111" stroke-width="2"/><path d="M17 1 C9 1 5 7 5 13 C5 22 17 34 17 34 C17 34 29 22 29 13 C29 7 25 1 17 1Z" fill="#8cc8f0" stroke="#111" stroke-width="2"/><circle cx="17" cy="13" r="5" fill="#fff" stroke="#111" stroke-width="2"/></svg>
<div class="a" style="left:8px;top:207px;width:133px;height:31px;border:1px solid #c6c6c6;background:#fff"></div>
<div class="t" style="left:17px;top:215.5px;font-size:17px;color:#444;font-family:'Liberation Serif',serif">A1</div>
<svg style="left:121px;top:218px" width="12" height="7" viewBox="0 0 12 7"><path d="M0 0H12L6 6Z" fill="#666"/></svg>
<div class="a" style="left:159px;top:216px;width:2px;height:2px;background:#999"></div>
<div class="a" style="left:159px;top:222px;width:2px;height:2px;background:#999"></div>
<div class="a" style="left:159px;top:228px;width:2px;height:2px;background:#999"></div>
<div class="a" style="left:180px;top:207px;width:143px;height:31px;border:1px solid #c6c6c6;background:#fff"></div>
<svg style="left:197px;top:215px" width="15" height="15" viewBox="0 0 15 15"><path d="M1 1L14 14M14 1L1 14" stroke="#b0b0b0" stroke-width="1.6"/></svg>
<svg style="left:242px;top:215px" width="17" height="14" viewBox="0 0 17 14"><path d="M1 7L6 12L16 1" fill="none" stroke="#b0b0b0" stroke-width="2"/></svg>
<div class="t" style="left:290px;top:213.5px;font-size:17px;color:#555;font-family:'Liberation Serif',serif;font-weight:bold"><i>f</i><span style="font-size:12px;font-style:italic">x</span></div>
<div class="a" style="left:327px;top:207px;width:1425px;height:31px;border:1px solid #c6c6c6;background:#fff"></div>
<svg style="left:1734px;top:218px" width="12" height="8" viewBox="0 0 12 8"><path d="M1 1L6 6L11 1" fill="none" stroke="#555" stroke-width="1.6"/></svg>
<div class="a" style="left:0px;top:251px;width:739px;height:23px;background:#fff"></div>
<svg style="left:28px;top:257px" width="13" height="13" viewBox="0 0 13 13"><path d="M12 0 V12 H0Z" fill="#dadada"/></svg>
<div class="a" style="left:44px;top:251px;width:95px;height:23px;background:#e1e1e1"></div>
<div class="a" style="left:0px;top:273px;width:736px;height:1px;background:#ababab"></div>
<svg style="left:0px;top:0px" width="760" height="1000" viewBox="0 0 760 1000"><path d="M0 296.5H736" stroke="#dadada" stroke-width="1"/><path d="M0 320.5H736" stroke="#dadada" stroke-width="1"/><path d="M0 343.5H736" stroke="#dadada" stroke-width="1"/><path d="M0 366.5H736" stroke="#dadada" stroke-width="1"/><path d="M0 390.5H736" stroke="#dadada" stroke-width="1"/><path d="M0 413.5H736" stroke="#dadada" stroke-width="1"/><path d="M0 437.5H736" stroke="#dadada" stroke-width="1"/><path d="M0 460.5H736" stroke="#dadada" stroke-width="1"/><path d="M0 483.5H736" stroke="#dadada" stroke-width="1"/><path d="M0 507.5H736" stroke="#dadada" stroke-width="1"/><path d="M0 530.5H736" stroke="#dadada" stroke-width="1"/><path d="M0 554.5H736" stroke="#dadada" stroke-width="1"/><path d="M0 577.5H736" stroke="#dadada" stroke-width="1"/><path d="M0 601.5H736" stroke="#dadada" stroke-width="1"/><path d="M0 624.5H736" stroke="#dadada" stroke-width="1"/><path d="M0 647.5H736" stroke="#dadada" stroke-width="1"/><path d="M0 671.5H736" stroke="#dadada" stroke-width="1"/><path d="M0 694.5H736" stroke="#dadada" stroke-width="1"/><path d="M0 718.5H736" stroke="#dadada" stroke-width="1"/><path d="M0 741.5H736" stroke="#dadada" stroke-width="1"/><path d="M0 765.5H736" stroke="#dadada" stroke-width="1"/><path d="M0 788.5H736" stroke="#dadada" stroke-width="1"/><path d="M0 811.5H736" stroke="#dadada" stroke-width="1"/><path d="M0 835.5H736" stroke="#dadada" stroke-width="1"/><path d="M0 858.5H736" stroke="#dadada" stroke-width="1"/><path d="M0 882.5H736" stroke="#dadada" stroke-width="1"/><path d="M0 905.5H736" stroke="#dadada" stroke-width="1"/><path d="M0 928.5H736" stroke="#dadada" stroke-width="1"/><path d="M0 952.5H736" stroke="#dadada" stroke-width="1"/><path d="M0 975.5H736" stroke="#dadada" stroke-width="1"/><path d="M0 999.5H736" stroke="#dadada" stroke-width="1"/><path d="M43.5 251V997" stroke="#dadada" stroke-width="1"/><path d="M137.5 251V997" stroke="#dadada" stroke-width="1"/><path d="M231.5 251V997" stroke="#dadada" stroke-width="1"/><path d="M324.5 251V997" stroke="#dadada" stroke-width="1"/><path d="M418.5 251V997" stroke="#dadada" stroke-width="1"/><path d="M512.5 251V997" stroke="#dadada" stroke-width="1"/><path d="M606.5 251V997" stroke="#dadada" stroke-width="1"/><path d="M700.5 251V997" stroke="#dadada" stroke-width="1"/></svg>
<div class="a" style="left:44px;top:251px;width:1px;height:746px;background:#ababab"></div>
<div class="a" style="left:0px;top:274px;width:44px;height:23px;background:#e1e1e1"></div>
<div class="a" style="left:43px;top:274px;width:2px;height:23px;background:#217346"></div>
<div class="t" style="left:-59.099999999999994px;width:300px;text-align:center;top:256.5px;font-size:17px;color:#217346;font-family:'Liberation Serif',serif">A</div>
<div class="t" style="left:34.70000000000002px;width:300px;text-align:center;top:256.5px;font-size:17px;color:#444;font-family:'Liberation Serif',serif">B</div>
<div class="t" style="left:128.5px;width:300px;text-align:center;top:256.5px;font-size:17px;color:#444;font-family:'Liberation Serif',serif">C</div>
<div class="t" style="left:222.29999999999995px;width:300px;text-align:center;top:256.5px;font-size:17px;color:#444;font-family:'Liberation Serif',serif">D</div>
<div class="t" style="left:316.09999999999997px;width:300px;text-align:center;top:256.5px;font-size:17px;color:#444;font-family:'Liberation Serif',serif">E</div>
<div class="t" style="left:409.9px;width:300px;text-align:center;top:256.5px;font-size:17px;color:#444;font-family:'Liberation Serif',serif">F</div>
<div class="t" style="left:503.69999999999993px;width:300px;text-align:center;top:256.5px;font-size:17px;color:#444;font-family:'Liberation Serif',serif">G</div>
<div class="t" style="left:-128px;width:300px;text-align:center;top:277.9px;font-size:17px;color:#217346;font-family:'Liberation Serif',serif">1</div>
<div class="t" style="left:-128px;width:300px;text-align:center;top:301.3px;font-size:17px;color:#444;font-family:'Liberation Serif',serif">2</div>
<div class="t" style="left:-128px;width:300px;text-align:center;top:324.8px;font-size:17px;color:#444;font-family:'Liberation Serif',serif">3</div>
<div class="t" style="left:-128px;width:300px;text-align:center;top:348.2px;font-size:17px;color:#444;font-family:'Liberation Serif',serif">4</div>
<div class="t" style="left:-128px;width:300px;text-align:center;top:371.6px;font-size:17px;color:#444;font-family:'Liberation Serif',serif">5</div>
<div class="t" style="left:-128px;width:300px;text-align:center;top:395.0px;font-size:17px;color:#444;font-family:'Liberation Serif',serif">6</div>
<div class="t" style="left:-128px;width:300px;text-align:center;top:418.4px;font-size:17px;color:#444;font-family:'Liberation Serif',serif">7</div>
<div class="t" style="left:-128px;width:300px;text-align:center;top:441.9px;font-size:17px;color:#444;font-family:'Liberation Serif',serif">8</div>
<div class="t" style="left:-128px;width:300px;text-align:center;top:465.3px;font-size:17px;color:#444;font-family:'Liberation Serif',serif">9</div>
<div class="t" style="left:-128px;width:300px;text-align:center;top:488.7px;font-size:17px;color:#444;font-family:'Liberation Serif',serif">10</div>
<div class="t" style="left:-128px;width:300px;text-align:center;top:512.1px;font-size:17px;color:#444;font-family:'Liberation Serif',serif">11</div>
<div class="t" style="left:-128px;width:300px;text-align:center;top:535.5px;font-size:17px;color:#444;font-family:'Liberation Serif',serif">12</div>
<div class="t" style="left:-128px;width:300px;text-align:center;top:559.0px;font-size:17px;color:#444;font-family:'Liberation Serif',serif">13</div>
<div class="t" style="left:-128px;width:300px;text-align:center;top:582.4px;font-size:17px;color:#444;font-family:'Liberation Serif',serif">14</div>
<div class="t" style="left:-128px;width:300px;text-align:center;top:605.8px;font-size:17px;color:#444;font-family:'Liberation Serif',serif">15</div>
<div class="t" style="left:-128px;width:300px;text-align:center;top:629.2px;font-size:17px;color:#444;font-family:'Liberation Serif',serif">16</div>
<div class="t" style="left:-128px;width:300px;text-align:center;top:652.6px;font-size:17px;color:#444;font-family:'Liberation Serif',serif">17</div>
<div class="t" style="left:-128px;width:300px;text-align:center;top:676.0px;font-size:17px;color:#444;font-family:'Liberation Serif',serif">18</div>
<div class="t" style="left:-128px;width:300px;text-align:center;top:699.5px;font-size:17px;color:#444;font-family:'Liberation Serif',serif">19</div>
<div class="t" style="left:-128px;width:300px;text-align:center;top:722.9px;font-size:17px;color:#444;font-family:'Liberation Serif',serif">20</div>
<div class="t" style="left:-128px;width:300px;text-align:center;top:746.3px;font-size:17px;color:#444;font-family:'Liberation Serif',serif">21</div>
<div class="t" style="left:-128px;width:300px;text-align:center;top:769.7px;font-size:17px;color:#444;font-family:'Liberation Serif',serif">22</div>
<div class="t" style="left:-128px;width:300px;text-align:center;top:793.2px;font-size:17px;color:#444;font-family:'Liberation Serif',serif">23</div>
<div class="t" style="left:-128px;width:300px;text-align:center;top:816.6px;font-size:17px;color:#444;font-family:'Liberation Serif',serif">24</div>
<div class="t" style="left:-128px;width:300px;text-align:center;top:840.0px;font-size:17px;color:#444;font-family:'Liberation Serif',serif">25</div>
<div class="t" style="left:-128px;width:300px;text-align:center;top:863.4px;font-size:17px;color:#444;font-family:'Liberation Serif',serif">26</div>
<div class="t" style="left:-128px;width:300px;text-align:center;top:886.8px;font-size:17px;color:#444;font-family:'Liberation Serif',serif">27</div>
<div class="t" style="left:-128px;width:300px;text-align:center;top:910.2px;font-size:17px;color:#444;font-family:'Liberation Serif',serif">28</div>
<div class="t" style="left:-128px;width:300px;text-align:center;top:933.7px;font-size:17px;color:#444;font-family:'Liberation Serif',serif">29</div>
<div class="t" style="left:-128px;width:300px;text-align:center;top:957.1px;font-size:17px;color:#444;font-family:'Liberation Serif',serif">30</div>
<div class="t" style="left:-128px;width:300px;text-align:center;top:980.5px;font-size:17px;color:#444;font-family:'Liberation Serif',serif">31</div>
<div class="a" style="left:43px;top:272px;width:97px;height:27px;border:2px solid #217346"></div>
<div class="a" style="left:135px;top:293px;width:7px;height:7px;background:#217346;border:1px solid #fff"></div>
<div class="a" style="left:735px;top:274px;width:1px;height:723px;background:#c6c6c6"></div>
<div class="a" style="left:736px;top:251px;width:27px;height:746px;background:#fff"></div>
<div class="a" style="left:740px;top:254px;width:19px;height:743px;background:#fff"></div>
<div class="a" style="left:740px;top:254px;width:19px;height:19px;border:1px solid #ababab"></div>
<svg style="left:745px;top:260px" width="9" height="6" viewBox="0 0 9 6"><path d="M0 5.5 L4.5 0 L9 5.5Z" fill="#666"/></svg>
<div class="a" style="left:740px;top:272px;width:19px;height:682px;border:1px solid #ababab;background:#fff"></div>
<div class="a" style="left:740px;top:979px;width:19px;height:18px;border:1px solid #ababab"></div>
<svg style="left:745px;top:985px" width="9" height="6" viewBox="0 0 9 6"><path d="M0 0 L9 0 L4.5 5.5Z" fill="#666"/></svg>
<div class="a" style="left:0px;top:997px;width:762px;height:36px;background:#f3f3f3"></div>
<div class="a" style="left:0px;top:997px;width:132px;height:1px;background:#c6c6c6"></div>
<div class="a" style="left:221px;top:997px;width:541px;height:1px;background:#c6c6c6"></div>
<div class="a" style="left:132px;top:997px;width:89px;height:32px;background:#fff;border-left:1px solid #c6c6c6;border-right:1px solid #c6c6c6"></div>
<div class="a" style="left:132px;top:1026px;width:89px;height:3px;background:#217346"></div>
<div class="t" style="left:26px;width:300px;text-align:center;top:1003.5px;font-size:17px;color:#217346;">Sheet1</div>
<svg style="left:35px;top:1008px" width="7" height="11" viewBox="0 0 7 11"><path d="M6 0 V11 L0 5.5Z" fill="#c0c0c0"/></svg>
<svg style="left:74px;top:1008px" width="7" height="11" viewBox="0 0 7 11"><path d="M0 0 V11 L6 5.5Z" fill="#c0c0c0"/></svg>
<svg style="left:263px;top:1003px" width="22" height="22" viewBox="0 0 22 22"><circle cx="11" cy="11" r="10" fill="none" stroke="#777" stroke-width="1.5"/><path d="M11 5V17M5 11H17" stroke="#555" stroke-width="2.2"/></svg>
<div class="a" style="left:458px;top:1008px;width:2px;height:2px;background:#999"></div>
<div class="a" style="left:458px;top:1013px;width:2px;height:2px;background:#999"></div>
<div class="a" style="left:458px;top:1018px;width:2px;height:2px;background:#999"></div>
<div class="a" style="left:481px;top:1005px;width:255px;height:20px;border:1px solid #ababab;background:#f3f3f3"></div>
<div class="a" style="left:481px;top:1005px;width:20px;height:20px;border:1px solid #ababab;background:#fff"></div>
<svg style="left:488px;top:1010px" width="6" height="10" viewBox="0 0 6 10"><path d="M5.5 0 V10 L0 5Z" fill="#444"/></svg>
<div class="a" style="left:500px;top:1005px;width:189px;height:20px;border:1px solid #ababab;background:#fff"></div>
<div class="a" style="left:716px;top:1005px;width:20px;height:20px;border:1px solid #ababab;background:#fff"></div>
<svg style="left:723px;top:1010px" width="6" height="10" viewBox="0 0 6 10"><path d="M0 0 V10 L5.5 5Z" fill="#444"/></svg>
<div class="a" style="left:762px;top:254px;width:2px;height:779px;background:#d6d6d6"></div>
<div class="a" style="left:0px;top:1033px;width:1760px;height:30px;background:#217346"></div>
<div class="t" style="left:10px;top:1039.0px;font-size:16px;color:#fff;">就绪</div>
<svg style="left:68px;top:1038px" width="18" height="18" viewBox="0 0 18 18"><circle cx="4" cy="4" r="3.5" fill="#fff"/><rect x="2" y="7" width="15" height="10" fill="none" stroke="#fff" stroke-width="1.5"/><path d="M5 10H15M5 13H15M8 8V17M12 8V17" stroke="#fff" stroke-width="1"/><rect x="9" y="2" width="8" height="4" fill="#fff"/></svg>
<div class="a" style="left:1357px;top:1033px;width:50px;height:30px;background:#1c5e3a"></div>
<svg style="left:1373px;top:1039px" width="18" height="16" viewBox="0 0 18 16"><rect x="1" y="1" width="16" height="14" fill="none" stroke="#fff" stroke-width="1.4"/><path d="M1 5.7H17M1 10.3H17M6.3 1V15M11.7 1V15" stroke="#fff" stroke-width="1.2"/></svg>
<svg style="left:1423px;top:1039px" width="18" height="16" viewBox="0 0 18 16"><rect x="1" y="1" width="16" height="14" fill="none" stroke="#fff" stroke-width="1.4"/><rect x="5" y="4" width="8" height="8" fill="none" stroke="#fff" stroke-width="1.2"/><path d="M7 7H11M7 9H11" stroke="#fff" stroke-width="1"/></svg>
<svg style="left:1472px;top:1039px" width="19" height="16" viewBox="0 0 19 16"><rect x="1" y="1" width="17" height="14" fill="none" stroke="#fff" stroke-width="1.4"/><rect x="3" y="1" width="4" height="6" fill="#fff"/><rect x="9" y="1" width="4" height="5" fill="#fff"/><path d="M8 1V8" stroke="#fff" stroke-width="1.2"/></svg>
<div class="a" style="left:1513px;top:1046px;width:6px;height:2px;background:#fff"></div>
<div class="a" style="left:1526px;top:1046px;width:130px;height:1px;background:#fff"></div>
<div class="a" style="left:1588px;top:1040px;width:5px;height:14px;background:#fff"></div>
<div class="t" style="left:1516px;width:300px;text-align:center;top:1037.0px;font-size:22px;color:#fff;font-weight:bold">+</div>
<div class="t" style="left:1692px;top:1039.0px;font-size:16px;color:#fff;">100%</div>
<div class="t" style="left:781px;top:271.5px;font-size:27px;color:#217346;">在线地图</div>
<svg style="left:1707px;top:278px" width="11" height="7" viewBox="0 0 11 7"><path d="M0 0H11L5.5 6Z" fill="#555"/></svg>
<svg style="left:1729px;top:275px" width="13" height="12" viewBox="0 0 13 12"><path d="M1 1L12 11M12 1L1 11" stroke="#444" stroke-width="2"/></svg>
<div class="a" style="left:773px;top:304px;width:975px;height:33px;background:#f3f3f3;border-top:1px solid #e8e8e8"></div>
<div class="a" style="left:775px;top:308px;width:25px;height:27px;background:#fff;opacity:.6"></div>
<div class="a" style="left:805px;top:308px;width:24px;height:27px;background:#fff;opacity:.6"></div>
<svg style="left:778px;top:310px" width="20" height="19" viewBox="0 0 20 19"><path d="M10 1 L19 9 L17 9 L17 18 L3 18 L3 9 L1 9Z" fill="none" stroke="#555" stroke-width="2.2" stroke-linejoin="round"/><rect x="8" y="11" width="4" height="7" fill="#555"/></svg>
<svg style="left:808px;top:309px" width="18" height="21" viewBox="0 0 18 21"><path d="M9 1 C4 1 1 4.5 1 8.5 C1 13 9 20 9 20 C9 20 17 13 17 8.5 C17 4.5 14 1 9 1Z" fill="#e84c4c"/><circle cx="9" cy="8.5" r="3.5" fill="#fff"/></svg>
<div class="t" style="left:831px;top:312.0px;font-size:16px;color:#222;">导入</div>
<svg style="left:876px;top:318px" width="7" height="4" viewBox="0 0 7 4"><path d="M0 0H7L3.5 4Z" fill="#222"/></svg>
<svg style="left:889px;top:309px" width="21" height="21" viewBox="0 0 21 21"><circle cx="10.5" cy="10.5" r="7" fill="none" stroke="#111" stroke-width="2.4"/><circle cx="10.5" cy="10.5" r="3" fill="#111"/><path d="M10.5 0V4M10.5 17V21M0 10.5H4M17 10.5H21" stroke="#111" stroke-width="2.4"/></svg>
<div class="t" style="left:913px;top:312.0px;font-size:16px;color:#222;">定位</div>
<div class="a" style="left:958px;top:310px;width:1px;height:20px;background:#c8c8c8"></div>
<svg style="left:965px;top:310px" width="21" height="20" viewBox="0 0 21 20"><path d="M1 15 L15 1 L20 6 L6 20Z" fill="#f2c232" stroke="#333" stroke-width="1.2"/><path d="M5 11L7 13M8 8L10 10M11 5L13 7" stroke="#333" stroke-width="1"/></svg>
<div class="t" style="left:989px;top:312.0px;font-size:16px;color:#222;">测量</div>
<svg style="left:1034px;top:318px" width="7" height="4" viewBox="0 0 7 4"><path d="M0 0H7L3.5 4Z" fill="#222"/></svg>
<svg style="left:1049px;top:309px" width="22" height="22" viewBox="0 0 22 22"><path d="M3 10 L12 3 L19 5 L18 15 L6 19Z" fill="#b8d4ee" stroke="#222" stroke-width="1.4"/><g fill="#f2c232" stroke="#333" stroke-width=".6"><rect x="1" y="8" width="4" height="4"/><rect x="10" y="1" width="4" height="4"/><rect x="17" y="3" width="4" height="4"/><rect x="16" y="13" width="4" height="4"/><rect x="4" y="17" width="4" height="4"/></g></svg>
<div class="t" style="left:1072px;top:312.0px;font-size:16px;color:#222;">绘图</div>
<svg style="left:1117px;top:318px" width="7" height="4" viewBox="0 0 7 4"><path d="M0 0H7L3.5 4Z" fill="#222"/></svg>
<svg style="left:1133px;top:309px" width="19" height="22" viewBox="0 0 19 22"><path d="M2 1 H12 L16 5 V20 H2Z" fill="#fff" stroke="#333" stroke-width="1.3"/><path d="M6 5V17M6 11L12 5M8 9L13 17" stroke="#2a6fd0" stroke-width="2" fill="none"/><path d="M10 20H18M15 17L18 20L15 23" stroke="#333" stroke-width="1.3" fill="none"/></svg>
<div class="t" style="left:1156px;top:312.0px;font-size:16px;color:#222;">导出</div>
<svg style="left:1201px;top:318px" width="7" height="4" viewBox="0 0 7 4"><path d="M0 0H7L3.5 4Z" fill="#222"/></svg>
<svg style="left:1217px;top:310px" width="18" height="20" viewBox="0 0 18 20"><path d="M1 12 L11 2 L17 8 L8 17 L4 17Z" fill="#f28a8a"/><path d="M1 12 L5 16" stroke="#fff" stroke-width="1.2"/><path d="M2 19H16" stroke="#888" stroke-width="1.2"/></svg>
<div class="t" style="left:1239px;top:312.0px;font-size:16px;color:#222;">清除</div>
<div class="a" style="left:1285px;top:310px;width:1px;height:20px;background:#c8c8c8"></div>
<svg style="left:1291px;top:310px" width="20" height="20" viewBox="0 0 20 20"><g transform="translate(10 10)"><ellipse cx="0" cy="-5.5" rx="3.2" ry="5" fill="#e84040" transform="rotate(0)"/><ellipse cx="0" cy="-5.5" rx="3.2" ry="5" fill="#f07030" transform="rotate(40)"/><ellipse cx="0" cy="-5.5" rx="3.2" ry="5" fill="#f0c020" transform="rotate(80)"/><ellipse cx="0" cy="-5.5" rx="3.2" ry="5" fill="#70c040" transform="rotate(120)"/><ellipse cx="0" cy="-5.5" rx="3.2" ry="5" fill="#30a8e0" transform="rotate(160)"/><ellipse cx="0" cy="-5.5" rx="3.2" ry="5" fill="#3a70d8" transform="rotate(200)"/><ellipse cx="0" cy="-5.5" rx="3.2" ry="5" fill="#8050c0" transform="rotate(240)"/><ellipse cx="0" cy="-5.5" rx="3.2" ry="5" fill="#e050a0" transform="rotate(280)"/><ellipse cx="0" cy="-5.5" rx="3.2" ry="5" fill="#40b080" transform="rotate(320)"/></g></svg>
<div class="t" style="left:1315px;top:312.0px;font-size:16px;color:#222;">底图设置</div>
<svg style="left:773px;top:337px" width="975" height="687" viewBox="0 0 975 687"><defs><clipPath id="mc"><rect width="975" height="687"/></clipPath></defs><g clip-path="url(#mc)"><rect width="975" height="687" fill="#fdfdfd"/><path d="M0,20 L40,30 L70,22 L110,40 L130,30" fill="none" stroke="#fbe3b6" stroke-width="1.6" stroke-linejoin="round" stroke-linecap="round" /><path d="M130,40 L160,70 L200,80 L240,60 L280,70" fill="none" stroke="#fbe3b6" stroke-width="1.6" stroke-linejoin="round" stroke-linecap="round" /><path d="M20,120 L60,150 L100,170 L150,165" fill="none" stroke="#fbe3b6" stroke-width="1.6" stroke-linejoin="round" stroke-linecap="round" /><path d="M140,80 L150,120 L148,160 L140,200" fill="none" stroke="#fbe3b6" stroke-width="1.6" stroke-linejoin="round" stroke-linecap="round" /><path d="M260,130 L300,150 L325,170 L360,190" fill="none" stroke="#fbe3b6" stroke-width="1.6" stroke-linejoin="round" stroke-linecap="round" /><path d="M420,20 L430,60 L460,90 L500,100" fill="none" stroke="#fbe3b6" stroke-width="1.6" stroke-linejoin="round" stroke-linecap="round" /><path d="M600,180 L620,210 L660,240 L700,260" fill="none" stroke="#fbe3b6" stroke-width="1.6" stroke-linejoin="round" stroke-linecap="round" /><path d="M780,250 L800,280 L820,300" fill="none" stroke="#fbe3b6" stroke-width="1.6" stroke-linejoin="round" stroke-linecap="round" /><path d="M890,200 L930,190 L975,170" fill="none" stroke="#fbe3b6" stroke-width="1.6" stroke-linejoin="round" stroke-linecap="round" /><path d="M845,195 L888,184 L931,173 L975,162" fill="none" stroke="#fbe3b6" stroke-width="1.6" stroke-linejoin="round" stroke-linecap="round" /><path d="M200,420 L230,440 L260,470 L300,480" fill="none" stroke="#fbe3b6" stroke-width="1.6" stroke-linejoin="round" stroke-linecap="round" /><path d="M380,430 L420,470 L460,500 L500,520" fill="none" stroke="#fbe3b6" stroke-width="1.6" stroke-linejoin="round" stroke-linecap="round" /><path d="M300,570 L330,580 L360,560" fill="none" stroke="#fbe3b6" stroke-width="1.6" stroke-linejoin="round" stroke-linecap="round" /><path d="M520,500 L540,530 L545,560" fill="none" stroke="#fbe3b6" stroke-width="1.6" stroke-linejoin="round" stroke-linecap="round" /><path d="M600,440 L630,470 L650,500" fill="none" stroke="#fbe3b6" stroke-width="1.6" stroke-linejoin="round" stroke-linecap="round" /><path d="M0,633 L43,637 L87,642" fill="none" stroke="#fbe3b6" stroke-width="1.6" stroke-linejoin="round" stroke-linecap="round" /><path d="M700,600 L740,630 L760,660 L780,687" fill="none" stroke="#fbe3b6" stroke-width="1.6" stroke-linejoin="round" stroke-linecap="round" /><path d="M540,620 L580,640 L620,650 L650,660" fill="none" stroke="#fbe3b6" stroke-width="1.6" stroke-linejoin="round" stroke-linecap="round" /><path d="M20,560 L40,590 L50,620 L60,660" fill="none" stroke="#fbe3b6" stroke-width="1.6" stroke-linejoin="round" stroke-linecap="round" /><path d="M160,480 L180,520 L200,560" fill="none" stroke="#fbe3b6" stroke-width="1.6" stroke-linejoin="round" stroke-linecap="round" /><path d="M250,240 L270,260 L300,270" fill="none" stroke="#fbe3b6" stroke-width="1.6" stroke-linejoin="round" stroke-linecap="round" /><path d="M100,250 L130,270 L160,300" fill="none" stroke="#fbe3b6" stroke-width="1.6" stroke-linejoin="round" stroke-linecap="round" /><path d="M560,280 L590,300 L620,330" fill="none" stroke="#fbe3b6" stroke-width="1.6" stroke-linejoin="round" stroke-linecap="round" /><path d="M700,300 L730,320 L750,330" fill="none" stroke="#fbe3b6" stroke-width="1.6" stroke-linejoin="round" stroke-linecap="round" /><path d="M900,300 L940,330 L975,350" fill="none" stroke="#fbe3b6" stroke-width="1.6" stroke-linejoin="round" stroke-linecap="round" /><path d="M650,560 L670,600 L700,620" fill="none" stroke="#fbe3b6" stroke-width="1.6" stroke-linejoin="round" stroke-linecap="round" /><path d="M480,600 L500,640 L520,687" fill="none" stroke="#fbe3b6" stroke-width="1.6" stroke-linejoin="round" stroke-linecap="round" /><path d="M0,642 L65,638 L144,633 L218,638 L327,655" fill="none" stroke="#fbe3b6" stroke-width="1.6" stroke-linejoin="round" stroke-linecap="round" /><path d="M160,380 L190,400 L230,420" fill="none" stroke="#fbe3b6" stroke-width="1.6" stroke-linejoin="round" stroke-linecap="round" /><path d="M250,300 L270,330 L300,350 L325,360" fill="none" stroke="#fbe3b6" stroke-width="1.6" stroke-linejoin="round" stroke-linecap="round" /><path d="M400,500 L420,540 L430,580" fill="none" stroke="#fbe3b6" stroke-width="1.6" stroke-linejoin="round" stroke-linecap="round" /><path d="M560,420 L600,430 L640,440" fill="none" stroke="#fbe3b6" stroke-width="1.6" stroke-linejoin="round" stroke-linecap="round" /><path d="M700,500 L730,520 L760,560" fill="none" stroke="#fbe3b6" stroke-width="1.6" stroke-linejoin="round" stroke-linecap="round" /><path d="M880,400 L920,420 L960,440" fill="none" stroke="#fbe3b6" stroke-width="1.6" stroke-linejoin="round" stroke-linecap="round" /><path d="M820,600 L860,620 L900,660" fill="none" stroke="#fbe3b6" stroke-width="1.6" stroke-linejoin="round" stroke-linecap="round" /><path d="M300,20 L320,50 L330,90" fill="none" stroke="#fbe3b6" stroke-width="1.6" stroke-linejoin="round" stroke-linecap="round" /><path d="M20,60 L50,80 L70,120" fill="none" stroke="#fbe3b6" stroke-width="1.6" stroke-linejoin="round" stroke-linecap="round" /><path d="M180,20 L200,40 L240,50" fill="none" stroke="#fbe3b6" stroke-width="1.6" stroke-linejoin="round" stroke-linecap="round" /><path d="M600,100 L640,120 L680,110" fill="none" stroke="#fbe3b6" stroke-width="1.6" stroke-linejoin="round" stroke-linecap="round" /><path d="M860,120 L900,140 L940,160" fill="none" stroke="#fbe3b6" stroke-width="1.6" stroke-linejoin="round" stroke-linecap="round" /><path d="M279,22 L266,43 L255,63 L247,82 L238,102" fill="none" stroke="#98d0f8" stroke-width="1.4" stroke-linejoin="round" stroke-linecap="round" /><path d="M390,164 L422,151 L450,138 L476,130 L509,112 L530,87 L541,78" fill="none" stroke="#98d0f8" stroke-width="1.4" stroke-linejoin="round" stroke-linecap="round" /><path d="M156,230 L164,252 L173,273 L184,295 L188,312" fill="none" stroke="#98d0f8" stroke-width="1.4" stroke-linejoin="round" stroke-linecap="round" /><path d="M201,360 L238,381 L281,377 L325,381" fill="none" stroke="#98d0f8" stroke-width="1.4" stroke-linejoin="round" stroke-linecap="round" /><path d="M325,371 L368,377 L412,373 L476,368 L541,373 L563,386 L595,394 L606,425 L628,460" fill="none" stroke="#98d0f8" stroke-width="1.4" stroke-linejoin="round" stroke-linecap="round" /><path d="M32,514 L43,497 L54,486 L65,473 L87,460" fill="none" stroke="#98d0f8" stroke-width="1.4" stroke-linejoin="round" stroke-linecap="round" /><path d="M552,460 L546,503 L539,536 L528,568 L520,598" fill="none" stroke="#98d0f8" stroke-width="1.4" stroke-linejoin="round" stroke-linecap="round" /><path d="M585,460 L574,503 L563,525 L559,568 L541,601 L533,655 L541,687" fill="none" stroke="#98d0f8" stroke-width="1.4" stroke-linejoin="round" stroke-linecap="round" /><path d="M396,609 L422,607 L455,624 L476,644 L498,676 L505,687" fill="none" stroke="#98d0f8" stroke-width="1.4" stroke-linejoin="round" stroke-linecap="round" /><path d="M399,655 L433,644 L455,640" fill="none" stroke="#98d0f8" stroke-width="1.4" stroke-linejoin="round" stroke-linecap="round" /><path d="M650,600 L700,620 L730,640 L760,660" fill="none" stroke="#98d0f8" stroke-width="1.4" stroke-linejoin="round" stroke-linecap="round" /><path d="M109,419 L87,463 L57,494 L26,520 L0,537" fill="none" stroke="#98d0f8" stroke-width="1.4" stroke-linejoin="round" stroke-linecap="round" /><path d="M0,390 L11,370 L23,359 L45,354 L75,331 L86,327 L97,313 L99,298" fill="none" stroke="#98d0f8" stroke-width="1.4" stroke-linejoin="round" stroke-linecap="round" /><path d="M0,4 L60,6 L110,12 L185,13 L205,8 L220,0" fill="none" stroke="#f8c35a" stroke-width="2.2" stroke-linejoin="round" stroke-linecap="round" /><path d="M80,91 L100,121 L121,151 L143,169 L173,180 L206,190 L227,199 L260,208 L292,214 L325,216 L360,225 L400,230" fill="none" stroke="#f8c35a" stroke-width="2.2" stroke-linejoin="round" stroke-linecap="round" /><path d="M0,119 L32,134 L65,139 L97,121 L130,108 L173,91 L206,87 L227,95 L249,104 L281,102 L325,82 L347,74 L379,67 L422,63 L466,58 L509,57 L533,63 L563,67 L595,65" fill="none" stroke="#f8c35a" stroke-width="2.2" stroke-linejoin="round" stroke-linecap="round" /><path d="M171,61 L151,91 L138,121 L128,151 L112,184 L95,216 L91,230 L82,260" fill="none" stroke="#f8c35a" stroke-width="2.2" stroke-linejoin="round" stroke-linecap="round" /><path d="M169,58 L195,74 L216,87 L234,95" fill="none" stroke="#f8c35a" stroke-width="2.2" stroke-linejoin="round" stroke-linecap="round" /><path d="M0,188 L65,195 L119,201 L173,203 L216,201" fill="none" stroke="#f8c35a" stroke-width="2.2" stroke-linejoin="round" stroke-linecap="round" /><path d="M121,43 L119,71 L119,108 L117,141" fill="none" stroke="#f8c35a" stroke-width="2.2" stroke-linejoin="round" stroke-linecap="round" /><path d="M283,13 L270,43 L260,76 L253,108 L255,130 L270,151 L281,173 L292,195 L303,216" fill="none" stroke="#f8c35a" stroke-width="2.2" stroke-linejoin="round" stroke-linecap="round" /><path d="M238,112 L216,125 L201,141 L195,173 L188,216 L184,260 L182,301" fill="none" stroke="#f8c35a" stroke-width="2.2" stroke-linejoin="round" stroke-linecap="round" /><path d="M150,0 L157,30 L160,55" fill="none" stroke="#f8c35a" stroke-width="2.2" stroke-linejoin="round" stroke-linecap="round" /><path d="M353,0 L357,22 L359,65 L357,97 L353,130 L349,162 L344,195 L340,230 L336,260" fill="none" stroke="#f8c35a" stroke-width="2.2" stroke-linejoin="round" stroke-linecap="round" /><path d="M392,156 L412,138 L429,123 L444,108 L466,95 L498,89 L531,80 L541,65" fill="none" stroke="#f8c35a" stroke-width="2.2" stroke-linejoin="round" stroke-linecap="round" /><path d="M420,0 L433,22 L448,43 L459,76 L463,97" fill="none" stroke="#f8c35a" stroke-width="2.2" stroke-linejoin="round" stroke-linecap="round" /><path d="M554,151 L563,173 L559,216 L574,295 L582,317 L585,360 L580,403 L574,460 L569,503 L574,520 L585,538 L598,564 L628,575 L650,585" fill="none" stroke="#f8c35a" stroke-width="2.2" stroke-linejoin="round" stroke-linecap="round" /><path d="M476,138 L479,173 L481,230 L472,230 L455,273" fill="none" stroke="#f8c35a" stroke-width="2.2" stroke-linejoin="round" stroke-linecap="round" /><path d="M0,258 L43,260 L87,265 L130,273 L184,282 L216,275 L260,252 L281,243 L325,234 L370,230 L420,240" fill="none" stroke="#f8c35a" stroke-width="2.2" stroke-linejoin="round" stroke-linecap="round" /><path d="M0,291 L32,295 L65,299 L108,306 L151,301 L184,304" fill="none" stroke="#f8c35a" stroke-width="2.2" stroke-linejoin="round" stroke-linecap="round" /><path d="M0,355 L43,360 L87,355 L130,347 L151,342" fill="none" stroke="#f8c35a" stroke-width="2.2" stroke-linejoin="round" stroke-linecap="round" /><path d="M0,410 L43,407 L76,399 L104,401" fill="none" stroke="#f8c35a" stroke-width="2.2" stroke-linejoin="round" stroke-linecap="round" /><path d="M82,230 L74,273 L69,317 L78,338 L74,381 L65,425 L54,460" fill="none" stroke="#f8c35a" stroke-width="2.2" stroke-linejoin="round" stroke-linecap="round" /><path d="M180,301 L162,327 L151,360 L141,403 L134,446 L130,470" fill="none" stroke="#f8c35a" stroke-width="2.2" stroke-linejoin="round" stroke-linecap="round" /><path d="M0,280 L6,267 L11,252 L22,230" fill="none" stroke="#f8c35a" stroke-width="2.2" stroke-linejoin="round" stroke-linecap="round" /><path d="M455,230 L457,252 L450,295 L446,317 L455,360 L459,403 L455,460 L460,500" fill="none" stroke="#f8c35a" stroke-width="2.2" stroke-linejoin="round" stroke-linecap="round" /><path d="M325,332 L390,338 L455,325 L520,334 L574,353 L606,355 L650,351 L672,352 L710,355 L747,358 L784,355 L788,351" fill="none" stroke="#f8c35a" stroke-width="2.2" stroke-linejoin="round" stroke-linecap="round" /><path d="M325,442 L368,444 L412,449 L455,460" fill="none" stroke="#f8c35a" stroke-width="2.2" stroke-linejoin="round" stroke-linecap="round" /><path d="M541,230 L563,243 L639,236 L650,243 L672,236 L715,230" fill="none" stroke="#f8c35a" stroke-width="2.2" stroke-linejoin="round" stroke-linecap="round" /><path d="M741,230 L758,243 L775,256 L791,269 L806,282 L821,295 L825,312 L827,327" fill="none" stroke="#f8c35a" stroke-width="2.2" stroke-linejoin="round" stroke-linecap="round" /><path d="M812,230 L797,247 L784,262 L775,282 L769,295 L760,308 L758,327 L763,349 L760,381" fill="none" stroke="#f8c35a" stroke-width="2.2" stroke-linejoin="round" stroke-linecap="round" /><path d="M949,230 L910,247 L877,252 L855,265 L845,273" fill="none" stroke="#f8c35a" stroke-width="2.2" stroke-linejoin="round" stroke-linecap="round" /><path d="M840,230 L838,252 L843,269 L840,295 L830,312" fill="none" stroke="#f8c35a" stroke-width="2.2" stroke-linejoin="round" stroke-linecap="round" /><path d="M750,293 L780,291 L812,293" fill="none" stroke="#f8c35a" stroke-width="2.2" stroke-linejoin="round" stroke-linecap="round" /><path d="M788,351 L771,371 L754,394 L737,414 L715,425 L700,446 L690,470 L680,500 L672,530" fill="none" stroke="#f8c35a" stroke-width="2.2" stroke-linejoin="round" stroke-linecap="round" /><path d="M659,295 L663,338 L661,381 L667,425 L672,460 L670,500 L663,540 L660,600" fill="none" stroke="#f8c35a" stroke-width="2.2" stroke-linejoin="round" stroke-linecap="round" /><path d="M775,325 L812,323" fill="none" stroke="#f8c35a" stroke-width="2.2" stroke-linejoin="round" stroke-linecap="round" /><path d="M0,598 L32,603 L65,607 L108,611 L151,616" fill="none" stroke="#f8c35a" stroke-width="2.2" stroke-linejoin="round" stroke-linecap="round" /><path d="M0,633 L43,637 L87,642 L130,644 L173,650 L216,659 L260,668 L303,676 L325,680" fill="none" stroke="#f8c35a" stroke-width="2.2" stroke-linejoin="round" stroke-linecap="round" /><path d="M87,514 L108,521 L130,525 L151,531 L184,534 L216,535" fill="none" stroke="#f8c35a" stroke-width="2.2" stroke-linejoin="round" stroke-linecap="round" /><path d="M151,460 L149,503 L151,547 L154,590 L151,633 L156,687" fill="none" stroke="#f8c35a" stroke-width="2.2" stroke-linejoin="round" stroke-linecap="round" /><path d="M201,503 L199,547 L238,590 L255,622 L268,655 L277,687" fill="none" stroke="#f8c35a" stroke-width="2.2" stroke-linejoin="round" stroke-linecap="round" /><path d="M141,644 L130,666 L108,687" fill="none" stroke="#f8c35a" stroke-width="2.2" stroke-linejoin="round" stroke-linecap="round" /><path d="M260,460 L268,482 L270,514" fill="none" stroke="#f8c35a" stroke-width="2.2" stroke-linejoin="round" stroke-linecap="round" /><path d="M515,460 L513,514 L511,547 L515,598 L520,624 L531,637 L541,655 L541,687" fill="none" stroke="#f8c35a" stroke-width="2.2" stroke-linejoin="round" stroke-linecap="round" /><path d="M511,553 L476,555 L455,568 L446,570" fill="none" stroke="#f8c35a" stroke-width="2.2" stroke-linejoin="round" stroke-linecap="round" /><path d="M520,464 L541,469 L563,464 L585,460" fill="none" stroke="#f8c35a" stroke-width="2.2" stroke-linejoin="round" stroke-linecap="round" /><path d="M325,601 L336,622 L347,637 L368,644 L390,640" fill="none" stroke="#f8c35a" stroke-width="2.2" stroke-linejoin="round" stroke-linecap="round" /><path d="M325,655 L368,666 L412,670 L455,663 L498,655 L541,650 L585,622 L628,620 L650,620 L690,612 L720,630" fill="none" stroke="#f8c35a" stroke-width="2.2" stroke-linejoin="round" stroke-linecap="round" /><path d="M368,519 L373,547 L386,568 L396,601 L401,622 L390,655 L383,687" fill="none" stroke="#f8c35a" stroke-width="2.2" stroke-linejoin="round" stroke-linecap="round" /><path d="M535,616 L552,644 L585,666 L606,687" fill="none" stroke="#f8c35a" stroke-width="2.2" stroke-linejoin="round" stroke-linecap="round" /><path d="M637,525 L637,611 L650,644 L660,687" fill="none" stroke="#f8c35a" stroke-width="2.2" stroke-linejoin="round" stroke-linecap="round" /><path d="M353,460 L357,482 L368,519" fill="none" stroke="#f8c35a" stroke-width="2.2" stroke-linejoin="round" stroke-linecap="round" /><path d="M812,93 L801,112 L784,141 L771,162 L760,190 L740,230" fill="none" stroke="#f8c35a" stroke-width="2.2" stroke-linejoin="round" stroke-linecap="round" /><path d="M819,100 L830,119 L836,141 L840,162 L840,195 L845,230" fill="none" stroke="#f8c35a" stroke-width="2.2" stroke-linejoin="round" stroke-linecap="round" /><path d="M890,87 L888,108 L877,134 L855,156 L845,184 L838,216" fill="none" stroke="#f8c35a" stroke-width="2.2" stroke-linejoin="round" stroke-linecap="round" /><path d="M923,82 L931,95 L953,102 L975,100" fill="none" stroke="#f8c35a" stroke-width="2.2" stroke-linejoin="round" stroke-linecap="round" /><path d="M964,108 L957,130 L964,151 L959,195 L953,230" fill="none" stroke="#f8c35a" stroke-width="2.2" stroke-linejoin="round" stroke-linecap="round" /><path d="M888,104 L920,97 L953,93" fill="none" stroke="#f8c35a" stroke-width="2.2" stroke-linejoin="round" stroke-linecap="round" /><path d="M609,3 L606,14 L595,23 L587,36 L580,50" fill="none" stroke="#f8c35a" stroke-width="2.2" stroke-linejoin="round" stroke-linecap="round" /><path d="M0,60 L30,80 L60,100 L80,91" fill="none" stroke="#f8c35a" stroke-width="2.2" stroke-linejoin="round" stroke-linecap="round" /><path d="M0,530 L20,540 L40,531" fill="none" stroke="#f8c35a" stroke-width="2.2" stroke-linejoin="round" stroke-linecap="round" /><path d="M680,530 L700,560 L715,580 L740,620 L760,650 L780,687" fill="none" stroke="#f8c35a" stroke-width="2.2" stroke-linejoin="round" stroke-linecap="round" /><path d="M600,687 L620,660 L650,640" fill="none" stroke="#f8c35a" stroke-width="2.2" stroke-linejoin="round" stroke-linecap="round" /><path d="M131,223 L127,288 L118,354 L109,433" fill="none" stroke="#f8c35a" stroke-width="2.2" stroke-linejoin="round" stroke-linecap="round" /><path d="M144,468 L196,459 L262,450 L327,441" fill="none" stroke="#f8c35a" stroke-width="2.2" stroke-linejoin="round" stroke-linecap="round" /><path d="M44,520 L109,528 L175,532 L218,535" fill="none" stroke="#f8c35a" stroke-width="2.2" stroke-linejoin="round" stroke-linecap="round" /><path d="M0,603 L87,599 L175,607 L262,616 L327,625" fill="none" stroke="#f8c35a" stroke-width="2.2" stroke-linejoin="round" stroke-linecap="round" /><path d="M245,603 L262,638 L279,687" fill="none" stroke="#f8c35a" stroke-width="2.2" stroke-linejoin="round" stroke-linecap="round" /><path d="M325,40 L312,40 L303,50 L292,65 L277,80 L266,91 L257,102 L238,95 L231,104 L234,112 L238,121 L234,125 L216,123 L201,128 L195,134 L190,151 L184,158 L180,173 L173,184 L167,195 L160,208 L151,221 L126,234 L113,250 L102,275 L99,291 L106,307 L117,313 L122,320 L124,340 L113,347 L100,335 L90,327 L75,329 L63,340 L45,349 L41,340 L20,338 L0,343" fill="none" stroke="#757575" stroke-width="1.8" stroke-linejoin="round" stroke-linecap="round" /><path d="M325,40 L357,39 L379,40 L399,39 L412,22 L420,4 L427,0" fill="none" stroke="#757575" stroke-width="1.8" stroke-linejoin="round" stroke-linecap="round" /><path d="M201,347 L184,355 L164,364 L147,377 L134,386 L121,403 L113,425 L104,446 L100,460 L90,480 L75,500 L54,520 L37,531 L54,540 L76,542 L87,547 L97,557 L113,572 L121,590 L125,607 L141,611 L156,609 L173,611 L195,607 L206,609 L225,611 L234,607 L247,603 L255,598 L264,603 L270,611 L281,624 L303,633 L316,644 L325,648 L336,648 L347,666 L344,687" fill="none" stroke="#757575" stroke-width="1.8" stroke-linejoin="round" stroke-linecap="round" /><path d="M225,611 L223,633 L234,650 L249,659 L270,663 L281,668 L275,687" fill="none" stroke="#757575" stroke-width="1.8" stroke-linejoin="round" stroke-linecap="round" /><path d="M349,590 L357,607 L362,633 L386,611 L401,622 L416,627 L433,618 L450,620 L453,598 L476,594 L498,598 L500,616 L502,629 L509,644 L531,637 L539,640 L541,622 L544,601 L559,588 L585,586 L591,573 L598,557 L604,531 L628,529 L650,520 L660,525" fill="none" stroke="#757575" stroke-width="1.8" stroke-linejoin="round" stroke-linecap="round" /><path d="M201,347 L230,340 L260,345 L290,335 L320,330" fill="none" stroke="#757575" stroke-width="1.8" stroke-linejoin="round" stroke-linecap="round" /><path d="M620,0 L975,0 L975,87 L962,82 L950,68 L935,46 L905,37 L860,36 L838,46 L815,72 L801,84 L797,95 L775,106 L752,125 L740,150 L726,162 L707,172 L694,172 L672,164 L650,162 L630,150 L615,135 L613,102 L615,86 L628,50 L635,32 L625,13Z" fill="#a0d7fb"/><path d="M546,0 L576,0 L568,6 L560,12 L556,17 L551,12 L547,6Z" fill="#a0d7fb"/><path d="M512,0 L518,0 L516,4 L513,4Z" fill="#a0d7fb"/><path d="M581,0 L587,14 L583,34" fill="none" stroke="#98d0f8" stroke-width="1.6" stroke-linejoin="round" stroke-linecap="round" /><path d="M975,230 L962,236 L949,243 L931,249 L910,262 L901,269 L899,280 L888,295 L877,291 L864,295 L860,304 L858,317 L860,327 L864,342 L845,347 L834,351 L821,355 L810,360 L801,368 L791,381 L780,386 L771,392 L767,405 L754,410 L749,420 L737,429 L730,436 L715,438 L713,460 L704,473 L693,482 L682,492 L678,514 L663,521 L652,531 L650,547 L650,577 L663,581 L678,580 L689,581 L691,585 L685,594 L693,603 L711,611 L717,620 L737,629 L758,637 L780,650 L801,659 L812,687 L975,687Z" fill="#a0d7fb"/><path d="M801,332 L790,334 L784,342 L786,351 L801,360 L808,352Z" fill="#a0d7fb"/><path d="M364,590 L372,588 L384,600 L390,612 L384,618 L374,612 L366,600Z" fill="#a0d7fb"/><path d="M589,572 L598,568 L606,576 L600,582 L590,580Z" fill="#a0d7fb"/><path d="M216,370 L226,366 L234,374 L230,381 L218,380Z" fill="#a0d7fb"/><path d="M300,520 L315,516 L325,520 L325,538 L312,540 L300,532Z" fill="#a0d7fb"/><circle cx="151" cy="57" r="4.5" fill="#e87878" stroke="#fff" stroke-width="1"/><text x="135" y="52" font-size="16" fill="#8a8a8a" stroke="#fff" stroke-width="3" paint-order="stroke">衡水</text><circle cx="249" cy="111" r="4.5" fill="#e87878" stroke="#fff" stroke-width="1"/><text x="235" y="105" font-size="16" fill="#8a8a8a" stroke="#fff" stroke-width="3" paint-order="stroke">德州</text><circle cx="576" cy="111" r="4.5" fill="#e87878" stroke="#fff" stroke-width="1"/><text x="561" y="106" font-size="16" fill="#8a8a8a" stroke="#fff" stroke-width="3" paint-order="stroke">东营</text><circle cx="196" cy="283" r="4.5" fill="#e87878" stroke="#fff" stroke-width="1"/><text x="180" y="279" font-size="16" fill="#8a8a8a" stroke="#fff" stroke-width="3" paint-order="stroke">聊城</text><circle cx="62" cy="405" r="4.5" fill="#e87878" stroke="#fff" stroke-width="1"/><text x="44" y="400" font-size="16" fill="#8a8a8a" stroke="#fff" stroke-width="3" paint-order="stroke">濮阳</text><circle cx="351" cy="327" r="4.5" fill="#e87878" stroke="#fff" stroke-width="1"/><text x="336" y="323" font-size="16" fill="#8a8a8a" stroke="#fff" stroke-width="3" paint-order="stroke">泰安</text><circle cx="818" cy="353" r="4.5" fill="#e87878" stroke="#fff" stroke-width="1"/><text x="803" y="347" font-size="16" fill="#8a8a8a" stroke="#fff" stroke-width="3" paint-order="stroke">青岛</text><circle cx="531" cy="519" r="4.5" fill="#e87878" stroke="#fff" stroke-width="1"/><text x="521" y="513" font-size="16" fill="#8a8a8a" stroke="#fff" stroke-width="3" paint-order="stroke">临沂</text><circle cx="379" cy="672" r="4.5" fill="#e87878" stroke="#fff" stroke-width="1"/><text x="365" y="667" font-size="16" fill="#8a8a8a" stroke="#fff" stroke-width="3" paint-order="stroke">徐州</text><circle cx="149" cy="637" r="4.5" fill="#e87878" stroke="#fff" stroke-width="1"/><text x="134" y="631" font-size="16" fill="#8a8a8a" stroke="#fff" stroke-width="3" paint-order="stroke">商丘</text><circle cx="968" cy="104" r="4.5" fill="#e87878" stroke="#fff" stroke-width="1"/><text x="955" y="103" font-size="16" fill="#8a8a8a" stroke="#fff" stroke-width="3" paint-order="stroke">烟台</text><circle cx="644" cy="240" r="4.5" fill="#e87878" stroke="#fff" stroke-width="1"/><text x="633" y="232" font-size="16" fill="#8a8a8a" stroke="#fff" stroke-width="3" paint-order="stroke">潍坊</text><circle cx="696" cy="464" r="4.5" fill="#e87878" stroke="#fff" stroke-width="1"/><circle cx="654" cy="606" r="4.5" fill="#e87878" stroke="#fff" stroke-width="1"/><circle cx="281" cy="466" r="4.5" fill="#e87878" stroke="#fff" stroke-width="1"/><circle cx="384" cy="569" r="4.5" fill="#e87878" stroke="#fff" stroke-width="1"/><text x="681" y="459" font-size="16" fill="#8a8a8a" stroke="#fff" stroke-width="3" paint-order="stroke">日照</text><text x="630" y="602" font-size="16" fill="#8a8a8a" stroke="#fff" stroke-width="3" paint-order="stroke">连云港</text><text x="0" y="25" font-size="16" fill="#333" stroke="#fff" stroke-width="3" paint-order="stroke">庄</text><text x="0" y="249" font-size="16" fill="#8a8a8a" stroke="#fff" stroke-width="3" paint-order="stroke">郸</text><text x="265" y="459" font-size="16" fill="#8a8a8a" stroke="#fff" stroke-width="3" paint-order="stroke">济宁</text><text x="369" y="565" font-size="16" fill="#8a8a8a" stroke="#fff" stroke-width="3" paint-order="stroke">枣庄</text><text x="613" y="12" font-size="16" fill="#5a7ab0" stroke="none" stroke-width="3" paint-order="stroke">黄河口</text><g transform="translate(273,5)"><rect x="0" y="0" width="28" height="16" rx="2" fill="#2b9a4c" stroke="#fff" stroke-width="0.8"/><rect x="1.5" y="1.5" width="25" height="2.5" fill="#f2b600"/><text x="14.0" y="14" font-size="11" fill="#fff" text-anchor="middle" font-family="Liberation Sans">G3</text></g><g transform="translate(52,79)"><rect x="0" y="0" width="28" height="16" rx="2" fill="#2b9a4c" stroke="#fff" stroke-width="0.8"/><rect x="1.5" y="1.5" width="25" height="2.5" fill="#f2b600"/><text x="14.0" y="14" font-size="11" fill="#fff" text-anchor="middle" font-family="Liberation Sans">G20</text></g><g transform="translate(-8,93)"><rect x="0" y="0" width="29" height="16" rx="2" fill="#2b9a4c" stroke="#fff" stroke-width="0.8"/><rect x="1.5" y="1.5" width="26" height="2.5" fill="#f2b600"/><text x="14.5" y="14" font-size="11" fill="#fff" text-anchor="middle" font-family="Liberation Sans">107</text></g><g transform="translate(116,151)"><rect x="0" y="0" width="32" height="16" rx="2" fill="#2b9a4c" stroke="#fff" stroke-width="0.8"/><rect x="1.5" y="1.5" width="29" height="2.5" fill="#f2b600"/><text x="16.0" y="14" font-size="11" fill="#fff" text-anchor="middle" font-family="Liberation Sans">G20</text></g><g transform="translate(202,201)"><rect x="0" y="0" width="31" height="16" rx="2" fill="#2b9a4c" stroke="#fff" stroke-width="0.8"/><rect x="1.5" y="1.5" width="28" height="2.5" fill="#e04040"/><text x="15.5" y="14" font-size="11" fill="#fff" text-anchor="middle" font-family="Liberation Sans">S14</text></g><g transform="translate(255,202)"><rect x="0" y="0" width="28" height="16" rx="2" fill="#2b9a4c" stroke="#fff" stroke-width="0.8"/><rect x="1.5" y="1.5" width="25" height="2.5" fill="#f2b600"/><text x="14.0" y="14" font-size="11" fill="#fff" text-anchor="middle" font-family="Liberation Sans">G2</text></g><g transform="translate(337,64)"><rect x="0" y="0" width="30" height="16" rx="2" fill="#2b9a4c" stroke="#fff" stroke-width="0.8"/><rect x="1.5" y="1.5" width="27" height="2.5" fill="#e04040"/><text x="15.0" y="14" font-size="11" fill="#fff" text-anchor="middle" font-family="Liberation Sans">S12</text></g><g transform="translate(434,52)"><rect x="0" y="0" width="32" height="16" rx="2" fill="#2b9a4c" stroke="#fff" stroke-width="0.8"/><rect x="1.5" y="1.5" width="29" height="2.5" fill="#e04040"/><text x="16.0" y="14" font-size="11" fill="#fff" text-anchor="middle" font-family="Liberation Sans">S12</text></g><g transform="translate(338,121)"><rect x="0" y="0" width="28" height="16" rx="2" fill="#2b9a4c" stroke="#fff" stroke-width="0.8"/><rect x="1.5" y="1.5" width="25" height="2.5" fill="#f2b600"/><text x="14.0" y="14" font-size="11" fill="#fff" text-anchor="middle" font-family="Liberation Sans">G2</text></g><g transform="translate(335,177)"><rect x="0" y="0" width="26" height="16" rx="2" fill="#2b9a4c" stroke="#fff" stroke-width="0.8"/><rect x="1.5" y="1.5" width="23" height="2.5" fill="#f2b600"/><text x="13.0" y="14" font-size="11" fill="#fff" text-anchor="middle" font-family="Liberation Sans">G2</text></g><g transform="translate(405,206)"><rect x="0" y="0" width="34" height="16" rx="2" fill="#2b9a4c" stroke="#fff" stroke-width="0.8"/><rect x="1.5" y="1.5" width="31" height="2.5" fill="#f2b600"/><text x="17.0" y="14" font-size="11" fill="#fff" text-anchor="middle" font-family="Liberation Sans">G20</text></g><g transform="translate(43,250)"><rect x="0" y="0" width="34" height="16" rx="2" fill="#2b9a4c" stroke="#fff" stroke-width="0.8"/><rect x="1.5" y="1.5" width="31" height="2.5" fill="#f2b600"/><text x="17.0" y="14" font-size="11" fill="#fff" text-anchor="middle" font-family="Liberation Sans">G22</text></g><g transform="translate(194,451)"><rect x="0" y="0" width="43" height="16" rx="2" fill="#2b9a4c" stroke="#fff" stroke-width="0.8"/><rect x="1.5" y="1.5" width="40" height="2.5" fill="#f2b600"/><text x="21.5" y="14" font-size="11" fill="#fff" text-anchor="middle" font-family="Liberation Sans">G1511</text></g><g transform="translate(549,239)"><rect x="0" y="0" width="32" height="16" rx="2" fill="#2b9a4c" stroke="#fff" stroke-width="0.8"/><rect x="1.5" y="1.5" width="29" height="2.5" fill="#f2b600"/><text x="16.0" y="14" font-size="11" fill="#fff" text-anchor="middle" font-family="Liberation Sans">G25</text></g><g transform="translate(577,352)"><rect x="0" y="0" width="31" height="16" rx="2" fill="#2b9a4c" stroke="#fff" stroke-width="0.8"/><rect x="1.5" y="1.5" width="28" height="2.5" fill="#f2b600"/><text x="15.5" y="14" font-size="11" fill="#fff" text-anchor="middle" font-family="Liberation Sans">G22</text></g><g transform="translate(587,446)"><rect x="0" y="0" width="43" height="16" rx="2" fill="#2b9a4c" stroke="#fff" stroke-width="0.8"/><rect x="1.5" y="1.5" width="40" height="2.5" fill="#f2b600"/><text x="21.5" y="14" font-size="11" fill="#fff" text-anchor="middle" font-family="Liberation Sans">G1511</text></g><g transform="translate(817,271)"><rect x="0" y="0" width="38" height="16" rx="2" fill="#2b9a4c" stroke="#fff" stroke-width="0.8"/><rect x="1.5" y="1.5" width="35" height="2.5" fill="#f2b600"/><text x="19.0" y="14" font-size="11" fill="#fff" text-anchor="middle" font-family="Liberation Sans">G204</text></g><g transform="translate(676,344)"><rect x="0" y="0" width="34" height="16" rx="2" fill="#2b9a4c" stroke="#fff" stroke-width="0.8"/><rect x="1.5" y="1.5" width="31" height="2.5" fill="#f2b600"/><text x="17.0" y="14" font-size="11" fill="#fff" text-anchor="middle" font-family="Liberation Sans">G22</text></g><g transform="translate(732,381)"><rect x="0" y="0" width="34" height="16" rx="2" fill="#2b9a4c" stroke="#fff" stroke-width="0.8"/><rect x="1.5" y="1.5" width="31" height="2.5" fill="#f2b600"/><text x="17.0" y="14" font-size="11" fill="#fff" text-anchor="middle" font-family="Liberation Sans">G15</text></g><g transform="translate(693,261)"><rect x="0" y="0" width="34" height="16" rx="2" fill="#2b9a4c" stroke="#fff" stroke-width="0.8"/><rect x="1.5" y="1.5" width="31" height="2.5" fill="#f2b600"/><text x="17.0" y="14" font-size="11" fill="#fff" text-anchor="middle" font-family="Liberation Sans">G20</text></g><g transform="translate(0,474)"><rect x="0" y="0" width="22" height="16" rx="2" fill="#2b9a4c" stroke="#fff" stroke-width="0.8"/><rect x="1.5" y="1.5" width="19" height="2.5" fill="#f2b600"/><text x="11.0" y="14" font-size="11" fill="#fff" text-anchor="middle" font-family="Liberation Sans">G45</text></g><g transform="translate(129,539)"><rect x="0" y="0" width="37" height="16" rx="2" fill="#2b9a4c" stroke="#fff" stroke-width="0.8"/><rect x="1.5" y="1.5" width="34" height="2.5" fill="#f2b600"/><text x="18.5" y="14" font-size="11" fill="#fff" text-anchor="middle" font-family="Liberation Sans">G3W</text></g><g transform="translate(65,604)"><rect x="0" y="0" width="32" height="16" rx="2" fill="#2b9a4c" stroke="#fff" stroke-width="0.8"/><rect x="1.5" y="1.5" width="29" height="2.5" fill="#f2b600"/><text x="16.0" y="14" font-size="11" fill="#fff" text-anchor="middle" font-family="Liberation Sans">G30</text></g><g transform="translate(238,670)"><rect x="0" y="0" width="27" height="16" rx="2" fill="#2b9a4c" stroke="#fff" stroke-width="0.8"/><rect x="1.5" y="1.5" width="24" height="2.5" fill="#f2b600"/><text x="13.5" y="14" font-size="11" fill="#fff" text-anchor="middle" font-family="Liberation Sans">G3</text></g><g transform="translate(82,681)"><rect x="0" y="0" width="31" height="16" rx="2" fill="#2b9a4c" stroke="#fff" stroke-width="0.8"/><rect x="1.5" y="1.5" width="28" height="2.5" fill="#e04040"/><text x="15.5" y="14" font-size="11" fill="#fff" text-anchor="middle" font-family="Liberation Sans">S</text></g><g transform="translate(503,601)"><rect x="0" y="0" width="28" height="16" rx="2" fill="#2b9a4c" stroke="#fff" stroke-width="0.8"/><rect x="1.5" y="1.5" width="25" height="2.5" fill="#f2b600"/><text x="14.0" y="14" font-size="11" fill="#fff" text-anchor="middle" font-family="Liberation Sans">G2</text></g><g transform="translate(633,523)"><rect x="0" y="0" width="40" height="16" rx="2" fill="#2b9a4c" stroke="#fff" stroke-width="0.8"/><rect x="1.5" y="1.5" width="37" height="2.5" fill="#f2b600"/><text x="20.0" y="14" font-size="11" fill="#fff" text-anchor="middle" font-family="Liberation Sans">G204</text></g><g transform="translate(640,661)"><rect x="0" y="0" width="32" height="16" rx="2" fill="#2b9a4c" stroke="#fff" stroke-width="0.8"/><rect x="1.5" y="1.5" width="29" height="2.5" fill="#f2b600"/><text x="16.0" y="14" font-size="11" fill="#fff" text-anchor="middle" font-family="Liberation Sans">G25</text></g><g transform="translate(346,501)"><rect x="0" y="0" width="28" height="16" rx="2" fill="#2b9a4c" stroke="#fff" stroke-width="0.8"/><rect x="1.5" y="1.5" width="25" height="2.5" fill="#f2b600"/><text x="14.0" y="14" font-size="11" fill="#fff" text-anchor="middle" font-family="Liberation Sans">G3</text></g><g transform="translate(799,83)"><rect x="0" y="0" width="33" height="16" rx="2" fill="#2b9a4c" stroke="#fff" stroke-width="0.8"/><rect x="1.5" y="1.5" width="30" height="2.5" fill="#f2b600"/><text x="16.5" y="14" font-size="11" fill="#fff" text-anchor="middle" font-family="Liberation Sans">G18</text></g><g transform="translate(735,159)"><rect x="0" y="0" width="33" height="16" rx="2" fill="#2b9a4c" stroke="#fff" stroke-width="0.8"/><rect x="1.5" y="1.5" width="30" height="2.5" fill="#f2b600"/><text x="16.5" y="14" font-size="11" fill="#fff" text-anchor="middle" font-family="Liberation Sans">G18</text></g><g transform="translate(865,42)"><rect x="0" y="0" width="38" height="16" rx="2" fill="#2b9a4c" stroke="#fff" stroke-width="0.8"/><rect x="1.5" y="1.5" width="35" height="2.5" fill="#f2b600"/><text x="19.0" y="14" font-size="11" fill="#fff" text-anchor="middle" font-family="Liberation Sans">G205</text></g><g transform="translate(860,119)"><rect x="0" y="0" width="32" height="16" rx="2" fill="#2b9a4c" stroke="#fff" stroke-width="0.8"/><rect x="1.5" y="1.5" width="29" height="2.5" fill="#f2b600"/><text x="16.0" y="14" font-size="11" fill="#fff" text-anchor="middle" font-family="Liberation Sans">G15</text></g><g transform="translate(808,204)"><rect x="0" y="0" width="32" height="16" rx="2" fill="#2b9a4c" stroke="#fff" stroke-width="0.8"/><rect x="1.5" y="1.5" width="29" height="2.5" fill="#f2b600"/><text x="16.0" y="14" font-size="11" fill="#fff" text-anchor="middle" font-family="Liberation Sans">G15</text></g><g transform="translate(947,169)"><rect x="0" y="0" width="30" height="16" rx="2" fill="#2b9a4c" stroke="#fff" stroke-width="0.8"/><rect x="1.5" y="1.5" width="27" height="2.5" fill="#e04040"/><text x="15.0" y="14" font-size="11" fill="#fff" text-anchor="middle" font-family="Liberation Sans">S11</text></g></g></svg>
<svg style="left:789px;top:350px" width="52" height="52" viewBox="0 0 52 52"><defs><linearGradient id="ng" x1="0" y1="0" x2="0" y2="1"><stop offset="0" stop-color="#fff"/><stop offset=".5" stop-color="#fff"/><stop offset=".55" stop-color="#f0f0f0"/><stop offset="1" stop-color="#f4f4f4"/></linearGradient></defs><circle cx="26" cy="26" r="25" fill="url(#ng)" stroke="#8a8a8a" stroke-width="1.3"/><path d="M20 13 L26 7.5 L32 13 M20 39 L26 44.5 L32 39 M15 20 L9.5 26 L15 32 M37 20 L42.5 26 L37 32" fill="none" stroke="#3a7ad8" stroke-width="2.6"/></svg>
<div class="a" style="left:804px;top:410px;width:22px;height:21px;background:linear-gradient(#fff 50%,#eee);border:1px solid #aaa;border-radius:3px;box-shadow:1px 1px 2px rgba(0,0,0,.3)"></div>
<svg style="left:809px;top:414px" width="12" height="12" viewBox="0 0 12 12"><path d="M6 1V11M1 6H11" stroke="#3a7ad8" stroke-width="2.6"/></svg>
<div class="a" style="left:804px;top:437px;width:22px;height:21px;background:linear-gradient(#fff 50%,#eee);border:1px solid #aaa;border-radius:3px;box-shadow:1px 1px 2px rgba(0,0,0,.3)"></div>
<div class="a" style="left:810px;top:446px;width:11px;height:3px;background:#3a7ad8"></div>
<svg style="left:794px;top:468px" width="42" height="42" viewBox="0 0 42 42"><circle cx="21" cy="21" r="20" fill="#fff" stroke="#888" stroke-width="1.3"/><path d="M6 26 L21 19 L36 26 L21 35Z" fill="#e84c3c"/><path d="M6 22 L21 15 L36 22 L21 31Z" fill="#3aa0e0"/><path d="M6 16.5 L21 4.5 L36 16.5 L21 26Z" fill="#f2c316"/></svg>
<div class="a" style="left:1640px;top:350px;width:96px;height:26px;background:#fff;box-shadow:0 1px 3px rgba(0,0,0,.3);border-radius:2px"></div>
<div class="a" style="left:1640px;top:350px;width:48px;height:26px;background:#8aa8d8"></div>
<div class="t" style="left:1514px;width:300px;text-align:center;top:355.0px;font-size:16px;color:#fff;font-weight:bold">地图</div>
<div class="t" style="left:1561px;width:300px;text-align:center;top:355.0px;font-size:16px;color:#222;">卫星</div>
<div class="a" style="left:1673px;top:945px;width:63px;height:65px;background:#ececec;border:1px solid #c8c8c8"></div>
<svg style="left:1686px;top:950px" width="36" height="38" viewBox="0 0 36 38"><circle cx="18" cy="13" r="11" fill="#fff" stroke="#888" stroke-width="1.5"/><circle cx="18" cy="13" r="6.5" fill="#2a70c8"/><path d="M13 13 A5 3 0 0 0 23 13" fill="#9ac4ee"/><path d="M11 26 L25 26 L18 36Z" fill="#fff" stroke="#888" stroke-width="1.5"/></svg>
<div class="t" style="left:1555px;width:300px;text-align:center;top:990.5px;font-size:17px;color:#333;">全景</div>
<div class="a" style="left:786px;top:67px;width:69px;height:104px;border:3px solid #c00000"></div>
<div class="a" style="left:786.0px;top:337px;width:3px;height:513px;background:#c00000"></div>
<svg style="left:781.5px;top:848px" width="12" height="12" viewBox="0 0 12 12"><path d="M0 0 H12 L6 12Z" fill="#c00000"/></svg>
<div class="a" style="left:829.0px;top:337px;width:3px;height:439px;background:#c00000"></div>
<svg style="left:824.5px;top:774px" width="12" height="12" viewBox="0 0 12 12"><path d="M0 0 H12 L6 12Z" fill="#c00000"/></svg>
<div class="a" style="left:895.5px;top:337px;width:3px;height:362px;background:#c00000"></div>
<svg style="left:891px;top:697px" width="12" height="12" viewBox="0 0 12 12"><path d="M0 0 H12 L6 12Z" fill="#c00000"/></svg>
<div class="a" style="left:978.0px;top:337px;width:3px;height:289px;background:#c00000"></div>
<svg style="left:973.5px;top:624px" width="12" height="12" viewBox="0 0 12 12"><path d="M0 0 H12 L6 12Z" fill="#c00000"/></svg>
<div class="a" style="left:1060.0px;top:337px;width:3px;height:215px;background:#c00000"></div>
<svg style="left:1055.5px;top:550px" width="12" height="12" viewBox="0 0 12 12"><path d="M0 0 H12 L6 12Z" fill="#c00000"/></svg>
<div class="a" style="left:1143.5px;top:337px;width:3px;height:143px;background:#c00000"></div>
<svg style="left:1139px;top:478px" width="12" height="12" viewBox="0 0 12 12"><path d="M0 0 H12 L6 12Z" fill="#c00000"/></svg>
<div class="a" style="left:1227.0px;top:337px;width:3px;height:73px;background:#c00000"></div>
<svg style="left:1222.5px;top:408px" width="12" height="12" viewBox="0 0 12 12"><path d="M0 0 H12 L6 12Z" fill="#c00000"/></svg>
<div class="a" style="left:1304.5px;top:337px;width:3px;height:6px;background:#c00000"></div>
<svg style="left:1300px;top:341px" width="12" height="12" viewBox="0 0 12 12"><path d="M0 0 H12 L6 12Z" fill="#c00000"/></svg>
<div class="a" style="left:786px;top:879px;width:442px;height:48px;border-radius:7px;background:linear-gradient(to bottom, rgba(115,115,115,.9) 0%, rgba(70,70,70,.9) 15%, rgba(42,42,42,.9) 35%, rgba(24,24,24,.9) 55%, rgba(38,38,38,.9) 78%, rgba(48,48,48,.9) 100%);box-shadow:0 0 5px 5px rgba(238,238,238,.6), 2px 3px 5px rgba(0,0,0,.3)"></div>
<div class="t" style="left:816px;top:889.5px;font-size:29px;color:#fff;font-weight:bold;text-shadow:0.45px 0 0 #fff,-0.45px 0 0 #fff,0 0.4px 0 #fff,1px 2px 2px rgba(0,0,0,.85)">重新加载地图</div>
<div class="a" style="left:767.5px;top:860.5px;width:43.0px;height:43.0px;border-radius:50%;background:radial-gradient(circle at 45% 40%, #d40000 0%, #c00000 60%, #a80000 100%);box-shadow:0 0 5px 3px rgba(255,255,255,.6), 2px 3px 4px rgba(0,0,0,.4)"></div>
<div class="t" style="left:769px;width:40px;text-align:center;top:867.0px;font-size:31px;color:#fff;font-weight:bold;text-shadow:1px 1px 2px rgba(0,0,0,.5)">1</div>
<div class="a" style="left:828px;top:805px;width:466px;height:49px;border-radius:7px;background:linear-gradient(to bottom, rgba(115,115,115,.9) 0%, rgba(70,70,70,.9) 15%, rgba(42,42,42,.9) 35%, rgba(24,24,24,.9) 55%, rgba(38,38,38,.9) 78%, rgba(48,48,48,.9) 100%);box-shadow:0 0 5px 5px rgba(238,238,238,.6), 2px 3px 5px rgba(0,0,0,.3)"></div>
<div class="t" style="left:857px;top:816.0px;font-size:29px;color:#fff;font-weight:bold;text-shadow:0.45px 0 0 #fff,-0.45px 0 0 #fff,0 0.4px 0 #fff,1px 2px 2px rgba(0,0,0,.85)">导入Excel表中站点/KML图层</div>
<div class="a" style="left:809.0px;top:786.5px;width:43.0px;height:43.0px;border-radius:50%;background:radial-gradient(circle at 45% 40%, #d40000 0%, #c00000 60%, #a80000 100%);box-shadow:0 0 5px 3px rgba(255,255,255,.6), 2px 3px 4px rgba(0,0,0,.4)"></div>
<div class="t" style="left:810.5px;width:40px;text-align:center;top:793.0px;font-size:31px;color:#fff;font-weight:bold;text-shadow:1px 1px 2px rgba(0,0,0,.5)">2</div>
<div class="a" style="left:896px;top:728px;width:466px;height:49px;border-radius:7px;background:linear-gradient(to bottom, rgba(115,115,115,.9) 0%, rgba(70,70,70,.9) 15%, rgba(42,42,42,.9) 35%, rgba(24,24,24,.9) 55%, rgba(38,38,38,.9) 78%, rgba(48,48,48,.9) 100%);box-shadow:0 0 5px 5px rgba(238,238,238,.6), 2px 3px 5px rgba(0,0,0,.3)"></div>
<div class="t" style="left:925px;top:739.0px;font-size:29px;color:#fff;font-weight:bold;text-shadow:0.45px 0 0 #fff,-0.45px 0 0 #fff,0 0.4px 0 #fff,1px 2px 2px rgba(0,0,0,.85)">根据经纬度定位地图中的位置</div>
<div class="a" style="left:876.5px;top:709.5px;width:43.0px;height:43.0px;border-radius:50%;background:radial-gradient(circle at 45% 40%, #d40000 0%, #c00000 60%, #a80000 100%);box-shadow:0 0 5px 3px rgba(255,255,255,.6), 2px 3px 4px rgba(0,0,0,.4)"></div>
<div class="t" style="left:878px;width:40px;text-align:center;top:716.0px;font-size:31px;color:#fff;font-weight:bold;text-shadow:1px 1px 2px rgba(0,0,0,.5)">3</div>
<div class="a" style="left:978px;top:655px;width:465px;height:48px;border-radius:7px;background:linear-gradient(to bottom, rgba(115,115,115,.9) 0%, rgba(70,70,70,.9) 15%, rgba(42,42,42,.9) 35%, rgba(24,24,24,.9) 55%, rgba(38,38,38,.9) 78%, rgba(48,48,48,.9) 100%);box-shadow:0 0 5px 5px rgba(238,238,238,.6), 2px 3px 5px rgba(0,0,0,.3)"></div>
<div class="t" style="left:1008px;top:665.5px;font-size:29px;color:#fff;font-weight:bold;text-shadow:0.45px 0 0 #fff,-0.45px 0 0 #fff,0 0.4px 0 #fff,1px 2px 2px rgba(0,0,0,.85)">测量距离、面积</div>
<div class="a" style="left:958.5px;top:636.5px;width:43.0px;height:43.0px;border-radius:50%;background:radial-gradient(circle at 45% 40%, #d40000 0%, #c00000 60%, #a80000 100%);box-shadow:0 0 5px 3px rgba(255,255,255,.6), 2px 3px 4px rgba(0,0,0,.4)"></div>
<div class="t" style="left:960px;width:40px;text-align:center;top:643.0px;font-size:31px;color:#fff;font-weight:bold;text-shadow:1px 1px 2px rgba(0,0,0,.5)">4</div>
<div class="a" style="left:1059px;top:581px;width:467px;height:48px;border-radius:7px;background:linear-gradient(to bottom, rgba(115,115,115,.9) 0%, rgba(70,70,70,.9) 15%, rgba(42,42,42,.9) 35%, rgba(24,24,24,.9) 55%, rgba(38,38,38,.9) 78%, rgba(48,48,48,.9) 100%);box-shadow:0 0 5px 5px rgba(238,238,238,.6), 2px 3px 5px rgba(0,0,0,.3)"></div>
<div class="t" style="left:1089px;top:591.5px;font-size:29px;color:#fff;font-weight:bold;text-shadow:0.45px 0 0 #fff,-0.45px 0 0 #fff,0 0.4px 0 #fff,1px 2px 2px rgba(0,0,0,.85)">在地图中绘制图形<span style="font-size:22px;display:inline-block;transform:scaleX(.96);transform-origin:0 50%">（点、线、面）</span></div>
<div class="a" style="left:1040.0px;top:562.5px;width:43.0px;height:43.0px;border-radius:50%;background:radial-gradient(circle at 45% 40%, #d40000 0%, #c00000 60%, #a80000 100%);box-shadow:0 0 5px 3px rgba(255,255,255,.6), 2px 3px 4px rgba(0,0,0,.4)"></div>
<div class="t" style="left:1041.5px;width:40px;text-align:center;top:569.0px;font-size:31px;color:#fff;font-weight:bold;text-shadow:1px 1px 2px rgba(0,0,0,.5)">5</div>
<div class="a" style="left:1145px;top:509px;width:466px;height:49px;border-radius:7px;background:linear-gradient(to bottom, rgba(115,115,115,.9) 0%, rgba(70,70,70,.9) 15%, rgba(42,42,42,.9) 35%, rgba(24,24,24,.9) 55%, rgba(38,38,38,.9) 78%, rgba(48,48,48,.9) 100%);box-shadow:0 0 5px 5px rgba(238,238,238,.6), 2px 3px 5px rgba(0,0,0,.3)"></div>
<div class="t" style="left:1175px;top:520.0px;font-size:29px;color:#fff;font-weight:bold;text-shadow:0.45px 0 0 #fff,-0.45px 0 0 #fff,0 0.4px 0 #fff,1px 2px 2px rgba(0,0,0,.85)">将绘制的图形导出<span style="font-size:22px;display:inline-block;transform:scaleX(.89);transform-origin:0 50%">（KML/MIF/Excel表）</span></div>
<div class="a" style="left:1125.5px;top:490.5px;width:43.0px;height:43.0px;border-radius:50%;background:radial-gradient(circle at 45% 40%, #d40000 0%, #c00000 60%, #a80000 100%);box-shadow:0 0 5px 3px rgba(255,255,255,.6), 2px 3px 4px rgba(0,0,0,.4)"></div>
<div class="t" style="left:1127px;width:40px;text-align:center;top:497.0px;font-size:31px;color:#fff;font-weight:bold;text-shadow:1px 1px 2px rgba(0,0,0,.5)">6</div>
<div class="a" style="left:1229px;top:443px;width:466px;height:48px;border-radius:7px;background:linear-gradient(to bottom, rgba(115,115,115,.9) 0%, rgba(70,70,70,.9) 15%, rgba(42,42,42,.9) 35%, rgba(24,24,24,.9) 55%, rgba(38,38,38,.9) 78%, rgba(48,48,48,.9) 100%);box-shadow:0 0 5px 5px rgba(238,238,238,.6), 2px 3px 5px rgba(0,0,0,.3)"></div>
<div class="t" style="left:1259px;top:453.5px;font-size:29px;color:#fff;font-weight:bold;text-shadow:0.45px 0 0 #fff,-0.45px 0 0 #fff,0 0.4px 0 #fff,1px 2px 2px rgba(0,0,0,.85)">清楚绘制图层</div>
<div class="a" style="left:1209.5px;top:424.0px;width:43.0px;height:43.0px;border-radius:50%;background:radial-gradient(circle at 45% 40%, #d40000 0%, #c00000 60%, #a80000 100%);box-shadow:0 0 5px 3px rgba(255,255,255,.6), 2px 3px 4px rgba(0,0,0,.4)"></div>
<div class="t" style="left:1211px;width:40px;text-align:center;top:430.5px;font-size:31px;color:#fff;font-weight:bold;text-shadow:1px 1px 2px rgba(0,0,0,.5)">7</div>
<div class="a" style="left:1306px;top:372px;width:420px;height:48px;border-radius:7px;background:linear-gradient(to bottom, rgba(115,115,115,.9) 0%, rgba(70,70,70,.9) 15%, rgba(42,42,42,.9) 35%, rgba(24,24,24,.9) 55%, rgba(38,38,38,.9) 78%, rgba(48,48,48,.9) 100%);box-shadow:0 0 5px 5px rgba(238,238,238,.6), 2px 3px 5px rgba(0,0,0,.3)"></div>
<div class="t" style="left:1336px;top:382.5px;font-size:29px;color:#fff;font-weight:bold;text-shadow:0.45px 0 0 #fff,-0.45px 0 0 #fff,0 0.4px 0 #fff,1px 2px 2px rgba(0,0,0,.85)">设置底图颜色<span style="font-size:22px;display:inline-block;transform:scaleX(.96);transform-origin:0 50%">（减淡/变灰）</span></div>
<div class="a" style="left:1286.5px;top:353.0px;width:43.0px;height:43.0px;border-radius:50%;background:radial-gradient(circle at 45% 40%, #d40000 0%, #c00000 60%, #a80000 100%);box-shadow:0 0 5px 3px rgba(255,255,255,.6), 2px 3px 4px rgba(0,0,0,.4)"></div>
<div class="t" style="left:1288px;width:40px;text-align:center;top:359.5px;font-size:31px;color:#fff;font-weight:bold;text-shadow:1px 1px 2px rgba(0,0,0,.5)">8</div>
<div class="a" style="left:855px;top:170px;width:403px;height:48px;border-radius:7px;background:linear-gradient(to bottom, rgba(115,115,115,.9) 0%, rgba(70,70,70,.9) 15%, rgba(42,42,42,.9) 35%, rgba(24,24,24,.9) 55%, rgba(38,38,38,.9) 78%, rgba(48,48,48,.9) 100%);box-shadow:0 0 5px 5px rgba(238,238,238,.6), 2px 3px 5px rgba(0,0,0,.3)"></div>
<div class="t" style="left:883px;top:180.5px;font-size:29px;color:#fff;font-weight:bold;text-shadow:0.45px 0 0 #fff,-0.45px 0 0 #fff,0 0.4px 0 #fff,1px 2px 2px rgba(0,0,0,.85)">点击按钮<span style="display:inline-block;width:29px;padding-left:3px">,</span>右侧出现工具栏</div>
<div class="a" style="left:835.5px;top:150.5px;width:43.0px;height:43.0px;border-radius:50%;background:radial-gradient(circle at 45% 40%, #d40000 0%, #c00000 60%, #a80000 100%);box-shadow:0 0 5px 3px rgba(255,255,255,.6), 2px 3px 4px rgba(0,0,0,.4)"></div>
<svg style="left:844px;top:159px" width="26" height="26" viewBox="0 0 26 26"><path d="M13 24 V6 M5 13 L13 5 L21 13" fill="none" stroke="#fff" stroke-width="4.2" stroke-linecap="round" stroke-linejoin="round"/></svg>
<div class="a" style="left:1484px;top:872px;width:244px;height:49px;border-radius:7px;background:linear-gradient(to bottom, rgba(110,125,135,.92) 0%, rgba(50,60,68,.92) 25%, rgba(25,30,35,.92) 55%, rgba(30,35,40,.92) 100%);box-shadow:0 0 5px 5px rgba(238,238,238,.6), 2px 3px 5px rgba(0,0,0,.3)"></div>
<div class="t" style="left:1514px;top:883.0px;font-size:29px;color:#fff;font-weight:bold;text-shadow:0.45px 0 0 #fff,-0.45px 0 0 #fff,0 0.4px 0 #fff,1px 2px 2px rgba(0,0,0,.85)">显示全景图</div>
<div class="a" style="left:1678.5px;top:896.0px;width:43.0px;height:43.0px;border-radius:50%;background:radial-gradient(circle at 45% 40%, #d40000 0%, #c00000 60%, #a80000 100%);box-shadow:0 0 5px 3px rgba(255,255,255,.6), 2px 3px 4px rgba(0,0,0,.4)"></div>
<svg style="left:1687px;top:904.5px" width="26" height="26" viewBox="0 0 26 26"><path d="M13 2 V20 M5 13 L13 21 L21 13" fill="none" stroke="#fff" stroke-width="4.2" stroke-linecap="round" stroke-linejoin="round"/></svg>
<div class="a" style="left:0px;top:0px;width:1760px;height:2px;background:#217346"></div>
<div class="a" style="left:0px;top:0px;width:2px;height:1063px;background:#217346"></div>
<div class="a" style="left:1758px;top:0px;width:2px;height:1063px;background:#217346"></div>
</body></html>
